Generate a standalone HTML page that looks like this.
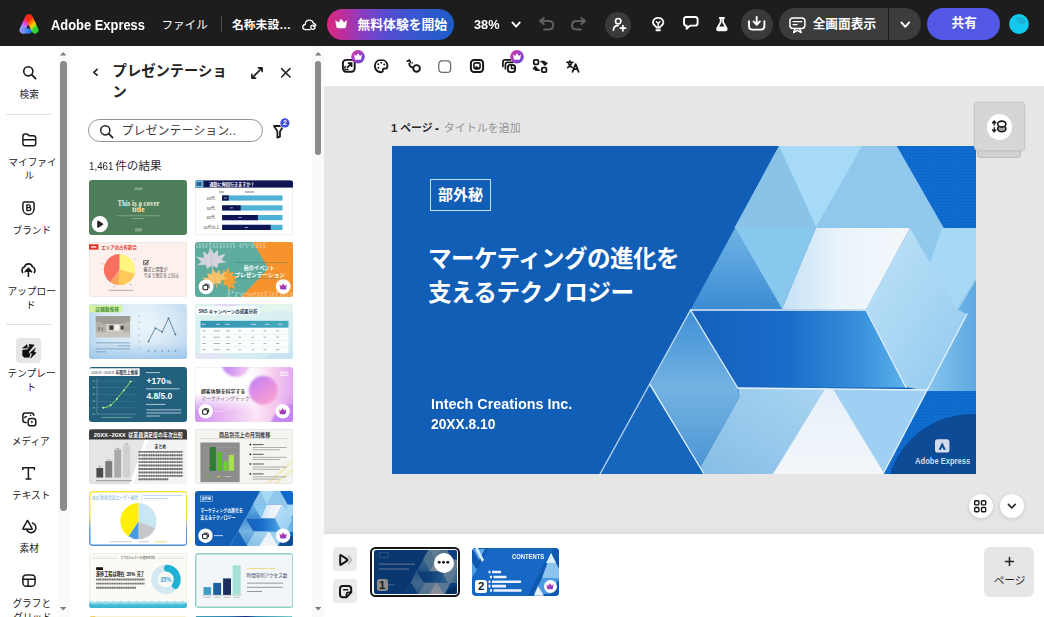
<!DOCTYPE html>
<html lang="ja">
<head>
<meta charset="utf-8">
<title>Adobe Express</title>
<style>
html,body{margin:0;padding:0}
html{width:1044px;height:617px;overflow:hidden}
body{width:1044px;height:617px;position:relative;overflow:hidden;background:#fff;font-family:"Liberation Sans","Noto Sans CJK JP",sans-serif;color:#222}
.app{position:absolute;left:0;top:0;width:1044px;height:617px;overflow:hidden;background:#fff}
.a{position:absolute}
.tl{position:absolute;white-space:nowrap;line-height:1.2;overflow:visible;height:1.2em;font-family:"Liberation Sans","Noto Sans CJK JP",sans-serif}
.ic{position:absolute;overflow:visible}
.lt{position:absolute;white-space:nowrap;line-height:1}
svg{display:block}
svg text.cj{font-family:"Liberation Sans","Noto Sans CJK JP",sans-serif}
</style>
</head>
<body>
<div class="app">
<header>
<div class="a" style="left:0px;top:0px;width:1044px;height:46px;background:#1d1d1d;"></div>
<svg class="ic" style="left:18.7px;top:13.7px" width="20" height="20" viewBox="0 0 20 20" ><defs>
<linearGradient id="lgL" x1="0.62" y1="0" x2="0.25" y2="1"><stop offset="0" stop-color="#ff2a1c"/><stop offset=".3" stop-color="#f0329a"/><stop offset=".62" stop-color="#c565f0"/><stop offset="1" stop-color="#8f9dff"/></linearGradient>
<linearGradient id="lgR" x1="0.3" y1="0" x2="0.75" y2="1"><stop offset="0" stop-color="#ff2a14"/><stop offset=".35" stop-color="#ff8a00"/><stop offset=".62" stop-color="#ffd400"/><stop offset=".85" stop-color="#7be01a"/><stop offset="1" stop-color="#2fd03a"/></linearGradient>
<linearGradient id="lgB" gradientUnits="userSpaceOnUse" x1="2" y1="0" x2="12" y2="0"><stop offset="0" stop-color="#a58cff"/><stop offset=".55" stop-color="#3f8cf4"/><stop offset="1" stop-color="#2a6ef0"/></linearGradient>
</defs>
<path d="M9.5 4 L4 16" stroke="url(#lgL)" stroke-width="7" stroke-linecap="round" fill="none"/>
<path d="M4.6 16.6 L10 16.6" stroke="url(#lgB)" stroke-width="5.8" stroke-linecap="round" fill="none"/>
<path d="M7.4 14.2 L9.2 10.6 L11.2 14.8Z" fill="#1d1d1d"/>
<path d="M10.4 4 L16 16" stroke="url(#lgR)" stroke-width="7" stroke-linecap="round" fill="none"/></svg>
<span class="lt" style="left:50.50px;top:16.86px;font-size:15.4px;font-weight:bold;color:#fff;transform:scaleX(0.8384);transform-origin:0 0;">Adobe Express</span>
<span class="tl" style="left:161.4px;top:17.5px;font-size:11.6px;width:43.3px;color:#fff">ファイル</span>
<div class="a" style="left:220.6px;top:16px;width:1px;height:16px;background:#505050;"></div>
<span class="tl" style="left:232.0px;top:17.5px;font-size:11.8px;width:55.7px;color:#fff;font-weight:bold">名称未設…</span>
<svg class="ic" style="left:302px;top:18.5px" width="16" height="12" viewBox="0 0 16 12" ><path d="M8.2 10.6 H3.6 C1.8 10.6 .8 9.4 .8 8 C.8 6.6 1.8 5.6 3.2 5.5 C3.4 3 5.2 1.2 7.4 1.2 C9.4 1.2 11 2.5 11.5 4.4 C12.6 4.5 13.6 5.2 14 6.2" fill="none" stroke="#fff" stroke-width="1.3" stroke-linecap="round" stroke-linejoin="round"/><circle cx="10.9" cy="8.3" r="2.1" fill="none" stroke="#fff" stroke-width="1.3" stroke-linecap="round" stroke-linejoin="round"/><path d="M12.9 5.9 v1.5 h-1.5" fill="none" stroke="#fff" stroke-width="1.1" stroke-linecap="round" stroke-linejoin="round"/></svg>
<div class="a" style="left:327px;top:8.7px;width:127px;height:31px;border-radius:16px;background:linear-gradient(90deg,#d9297f 0%,#c22d97 11%,#8d3cbf 27%,#5c4bd0 44%,#3b55d0 66%,#1e5cc8 100%)"></div>
<svg class="ic" style="left:335px;top:19.2px" width="12.4" height="9.2" viewBox="0 0 12.4 9.2" ><path d="M0.744 1.656 L3.3480000000000003 3.8639999999999994 L6.2 0.184 L9.052 3.8639999999999994 L11.655999999999999 1.656 L10.664 7.911999999999999 Q10.54 9.016 9.176 9.016 L3.224 9.016 Q1.8599999999999999 9.016 1.7360000000000002 7.911999999999999Z" fill="#fff" stroke="#fff" stroke-width=".6" stroke-linejoin="round"/></svg>
<span class="tl" style="left:357.5px;top:16.7px;font-size:12.8px;width:89.5px;color:#fff;font-weight:bold">無料体験を開始</span>
<span class="lt" style="left:474.40px;top:18.00px;font-size:13px;font-weight:bold;color:#fff;transform:scaleX(0.9800);transform-origin:0 0;">38%</span>
<svg class="ic" style="left:511.6px;top:22px" width="8.2" height="5" viewBox="0 0 8.2 5" ><path d="M.4 .4 L4.1 4.6 L7.799999999999999 .4" fill="none" stroke="#fff" stroke-width="1.9" stroke-linecap="round" stroke-linejoin="round"/></svg>
<svg class="ic" style="left:539px;top:17px" width="15.2" height="13.2" viewBox="0 0 15.2 13.2" ><path d="M4.8 .9 L1.2 4 L4.8 7.1 M1.6 4 H9.6 C12.4 4 14.2 5.8 14.2 8.2 C14.2 10.6 12.4 12.4 9.6 12.4 H5.2" fill="none" stroke="#606060" stroke-width="2.0" stroke-linecap="round" stroke-linejoin="round"/></svg>
<svg class="ic" style="left:571px;top:17px" width="15.2" height="13.2" viewBox="0 0 15.2 13.2" ><g transform="translate(15.2 0) scale(-1 1)"><path d="M4.8 .9 L1.2 4 L4.8 7.1 M1.6 4 H9.6 C12.4 4 14.2 5.8 14.2 8.2 C14.2 10.6 12.4 12.4 9.6 12.4 H5.2" fill="none" stroke="#606060" stroke-width="2.0" stroke-linecap="round" stroke-linejoin="round"/></g></svg>
<div class="a" style="left:605.3px;top:12.3px;width:25.4px;height:25.4px;border-radius:50%;background:#3a3a3a"></div>
<svg class="ic" style="left:610.5px;top:17px" width="15.5" height="15" viewBox="0 0 15.5 15" ><circle cx="7.2" cy="4.2" r="2.7" fill="none" stroke="#fff" stroke-width="1.7" stroke-linecap="round" stroke-linejoin="round"/><path d="M2.4 13.2 C2.6 10.2 4.4 8.7 7 8.7" fill="none" stroke="#fff" stroke-width="1.7" stroke-linecap="round" stroke-linejoin="round"/><path d="M11.9 8.6 v5.2 M9.3 11.2 h5.2" fill="none" stroke="#fff" stroke-width="1.7" stroke-linecap="round" stroke-linejoin="round"/></svg>
<svg class="ic" style="left:651.8px;top:16.6px" width="12.4" height="14.4" viewBox="0 0 12.4 14.4" ><path d="M4.5 10.6 C4.5 9.2 1 8.2 1 5.4 C1 2.7 3.3 .9 6.2 .9 C9.1 .9 11.4 2.7 11.4 5.4 C11.4 8.2 7.9 9.2 7.9 10.6 Z" fill="none" stroke="#fff" stroke-width="1.8" stroke-linecap="round" stroke-linejoin="round"/><path d="M4.4 4.6 L6.2 6.6 L8 4.6 M6.2 6.6 V10.4" fill="none" stroke="#fff" stroke-width="1.4" stroke-linecap="round" stroke-linejoin="round"/><path d="M4.4 13.2 H8" fill="none" stroke="#fff" stroke-width="1.9" stroke-linecap="round" stroke-linejoin="round"/></svg>
<svg class="ic" style="left:682.6px;top:16.2px" width="15.6" height="14" viewBox="0 0 15.6 14" ><path d="M3.2 1 H12 Q14.6 1 14.6 3.4 V7.2 Q14.6 9.6 12 9.6 H7 L3.6 12.8 V9.6 H3.2 Q1 9.6 1 7.2 V3.4 Q1 1 3.2 1Z" fill="none" stroke="#fff" stroke-width="1.9" stroke-linecap="round" stroke-linejoin="round"/></svg>
<svg class="ic" style="left:716.1px;top:16.6px" width="11.8" height="14.4" viewBox="0 0 11.8 14.4" ><path d="M3.8 1 H8 M4.7 1 V5.2 L1.2 11.4 Q.7 13.3 2.4 13.3 H9.4 Q11.1 13.3 10.6 11.4 L7.1 5.2 V1" fill="none" stroke="#fff" stroke-width="1.8" stroke-linecap="round" stroke-linejoin="round"/><path d="M2.6 9.6 H9.2 L10.4 12 Q10.6 13 9.4 13 H2.4 Q1.2 13 1.4 12Z" fill="#fff"/></svg>
<div class="a" style="left:741.2px;top:8.8px;width:31.4px;height:31.4px;border-radius:50%;background:#3a3a3a"></div>
<svg class="ic" style="left:748.4px;top:16.2px" width="17.4" height="14.6" viewBox="0 0 17.4 14.6" ><path d="M1 5.2 V10 Q1 13.6 4.6 13.6 H12.8 Q16.4 13.6 16.4 10 V5.2" fill="none" stroke="#fff" stroke-width="1.9" stroke-linecap="round" stroke-linejoin="round"/><path d="M8.7 1 V8.4 M5.5 5.4 L8.7 8.8 L11.9 5.4" fill="none" stroke="#fff" stroke-width="1.9" stroke-linecap="round" stroke-linejoin="round"/></svg>
<div class="a" style="left:779px;top:8.2px;width:142.4px;height:32px;border-radius:16px;background:#3c3c3c"></div>
<div class="a" style="left:888px;top:8.2px;width:1px;height:32px;background:#1d1d1d;"></div>
<svg class="ic" style="left:789px;top:16.5px" width="16.8" height="16.6" viewBox="0 0 16.8 16.6" ><rect x=".9" y=".9" width="15" height="10.6" rx="3.2" fill="none" stroke="#fff" stroke-width="1.5" stroke-linecap="round" stroke-linejoin="round"/><path d="M4 4.6 H12.8 M4 7.6 H8" fill="none" stroke="#fff" stroke-width="1.3" stroke-linecap="round" stroke-linejoin="round"/><path d="M6.2 11.6 L4.6 15.6 L8.4 13.4 L12.2 15.6 L10.6 11.6" fill="none" stroke="#fff" stroke-width="1.4" stroke-linecap="round" stroke-linejoin="round"/></svg>
<span class="tl" style="left:812.7px;top:17.0px;font-size:12.7px;width:63.6px;color:#fff;font-weight:bold">全画面表示</span>
<svg class="ic" style="left:901px;top:21.6px" width="8.6" height="5.2" viewBox="0 0 8.6 5.2" ><path d="M.4 .4 L4.3 4.8 L8.2 .4" fill="none" stroke="#fff" stroke-width="1.9" stroke-linecap="round" stroke-linejoin="round"/></svg>
<div class="a" style="left:927.3px;top:8.2px;width:72.5px;height:32px;border-radius:16px;background:#5258e4"></div>
<span class="tl" style="left:951.6px;top:15.8px;font-size:12.6px;width:24.0px;color:#fff;font-weight:bold">共有</span>
<svg class="ic" style="left:1008.6px;top:14px" width="20" height="20" viewBox="0 0 20 20" ><circle cx="10" cy="10" r="9.9" fill="#14c9ee"/><path d="M10 10 L6.2 4 A7 7 0 0 1 16.8 8.2 Q14.5 11.8 10 10Z" fill="#1da9c9" opacity=".75"/></svg>
</header>
<nav>
<svg class="ic" style="left:22.6px;top:65.9px" width="13.4" height="13.4" viewBox="0 0 13.4 13.4" ><circle cx="5.3" cy="5.3" r="4.6" fill="none" stroke="#1a1a1a" stroke-width="1.6" stroke-linecap="round" stroke-linejoin="round"/><path d="M8.7 8.7 L12.6 12.6" fill="none" stroke="#1a1a1a" stroke-width="1.8" stroke-linecap="round" stroke-linejoin="round"/></svg>
<span class="tl" style="left:19.5px;top:88.7px;font-size:9.7px;width:18.6px;color:#222">検索</span>
<div class="a" style="left:6px;top:114px;width:45px;height:1px;background:#e1e1e1;"></div>
<svg class="ic" style="left:21.6px;top:133.3px" width="14.6" height="13.6" viewBox="0 0 14.6 13.6" ><path d="M.9 3.2 Q.9 .9 3.2 .9 H4.6 Q5.5 .9 6.1 1.7 Q6.8 2.7 7.8 2.7 H11.4 Q13.7 2.7 13.7 5 V10.4 Q13.7 12.7 11.4 12.7 H3.2 Q.9 12.7 .9 10.4Z M.9 6.7 H13.7" fill="none" stroke="#1a1a1a" stroke-width="1.5" stroke-linecap="round" stroke-linejoin="round"/></svg>
<span class="tl" style="left:8.3px;top:156.6px;font-size:9.7px;width:40.9px;color:#222">マイファイ</span><span class="tl" style="left:24.4px;top:170.4px;font-size:9.7px;width:8.8px;color:#222">ル</span>
<svg class="ic" style="left:22.3px;top:200.8px" width="13" height="14.4" viewBox="0 0 13 14.4" ><path d="M2.6 .9 H10.4 Q12.1 .9 12.1 2.6 V7.4 C12.1 11 9.6 13.4 6.5 13.4 C3.4 13.4 .9 11 .9 7.4 V2.6 Q.9 .9 2.6 .9Z" fill="none" stroke="#1a1a1a" stroke-width="1.5" stroke-linecap="round" stroke-linejoin="round"/><path d="M4.9 3.9 V9.6 H7.2 Q8.9 9.6 8.9 8.1 Q8.9 6.6 7.2 6.6 H4.9 M4.9 3.9 H6.8 Q8.3 3.9 8.3 5.2 Q8.3 6.6 6.8 6.6" fill="none" stroke="#1a1a1a" stroke-width="1.4" stroke-linecap="round" stroke-linejoin="round"/></svg>
<span class="tl" style="left:12.5px;top:224.9px;font-size:9.7px;width:32.4px;color:#222">ブランド</span>
<svg class="ic" style="left:21.4px;top:262.8px" width="15" height="14.4" viewBox="0 0 15 14.4" ><path d="M1.6 9.6 C.4 7.2 1 4.6 3.6 3.8 C4.2 1.8 5.8 .9 7.6 .9 C9.6 .9 11 2 11.4 3.8 C13.8 4.4 14.6 7.2 13.4 9.6" fill="none" stroke="#1a1a1a" stroke-width="1.6" stroke-linecap="round" stroke-linejoin="round"/><path d="M7.4 13.4 V6 M4.2 8.8 L7.4 5.4 L10.6 8.8" fill="none" stroke="#1a1a1a" stroke-width="1.6" stroke-linecap="round" stroke-linejoin="round"/><path d="M4.4 9 L7.4 5.8 L10.4 9Z" fill="#1a1a1a"/></svg>
<span class="tl" style="left:7.5px;top:285.5px;font-size:9.7px;width:42.9px;color:#222">アップロー</span><span class="tl" style="left:26.1px;top:300.2px;font-size:9.7px;width:5.8px;color:#222">ド</span>
<div class="a" style="left:6px;top:323.5px;width:45px;height:1px;background:#e1e1e1;"></div>
<div class="a" style="left:16px;top:338.2px;width:25px;height:25px;background:#e6e6e6;border-radius:4px;"></div>
<svg class="ic" style="left:21.6px;top:343.6px" width="14.6" height="14.4" viewBox="0 0 14.6 14.4" ><path d="M0.66 4.01 L5.06 0.70 L5.25 4.01Z M7.28 0.47 L12.18 1.01 L6.50 7.98 L8.05 10.19 L7.12 13.15 L2.22 13.15 L0.74 11.67 L0.74 6.07 L5.56 5.84 L7.28 2.53Z M13.35 4.36 L8.29 8.79 L10.39 9.81 L8.75 14.09 L14.12 8.87 L11.71 7.94Z" fill="#111" stroke="#111" stroke-width=".7" stroke-linejoin="round"/></svg>
<span class="tl" style="left:7.5px;top:367.6px;font-size:9.7px;width:43.1px;color:#222">テンプレー</span><span class="tl" style="left:26.4px;top:381.8px;font-size:9.7px;width:5.2px;color:#222">ト</span>
<svg class="ic" style="left:21.6px;top:411.8px" width="14.8" height="14.6" viewBox="0 0 14.8 14.6" ><path d="M4.2 10.4 H3.4 Q.9 10.4 .9 7.9 V3.4 Q.9 .9 3.4 .9 H9.2 Q11.7 .9 11.9 3.2" fill="none" stroke="#1a1a1a" stroke-width="1.5" stroke-linecap="round" stroke-linejoin="round"/><path d="M2.6 5.6 Q3.4 4.4 4.6 4.8" fill="none" stroke="#1a1a1a" stroke-width="1.3" stroke-linecap="round" stroke-linejoin="round"/><circle cx="8.6" cy="3.4" r=".8" fill="#1a1a1a"/><rect x="6.2" y="6.4" width="7.6" height="7.4" rx="2.4" fill="none" stroke="#1a1a1a" stroke-width="1.5" stroke-linecap="round" stroke-linejoin="round"/><path d="M9.2 8.6 L11.4 10.1 L9.2 11.6Z" fill="#1a1a1a"/></svg>
<span class="tl" style="left:11.7px;top:436.4px;font-size:9.7px;width:33.3px;color:#222">メディア</span>
<svg class="ic" style="left:22.3px;top:466.8px" width="13.2" height="12.8" viewBox="0 0 13.2 12.8" ><path d="M.8 2.6 V.8 H12.4 V2.6 M6.4 .8 V11.9 M4.2 11.9 H8.8" fill="none" stroke="#1a1a1a" stroke-width="1.5" stroke-linecap="round" stroke-linejoin="round"/></svg>
<span class="tl" style="left:12.0px;top:489.6px;font-size:9.7px;width:33.0px;color:#222">テキスト</span>
<svg class="ic" style="left:21.5px;top:519.2px" width="15.4" height="14.8" viewBox="0 0 15.4 14.8" ><path d="M10.4 4 A4.9 4.9 0 1 1 4.4 10.2" fill="none" stroke="#1a1a1a" stroke-width="1.5" stroke-linecap="round" stroke-linejoin="round"/><path d="M5.5 1.4 L.9 9.6 Q.6 10.3 1.5 10.3 H9.6 Q10.5 10.3 10.1 9.6 L5.6 1.4Z" fill="none" stroke="#1a1a1a" stroke-width="1.5" stroke-linecap="round" stroke-linejoin="round"/></svg>
<span class="tl" style="left:19.5px;top:543.2px;font-size:9.7px;width:18.6px;color:#222">素材</span>
<svg class="ic" style="left:21.8px;top:574.2px" width="14" height="13.2" viewBox="0 0 14 13.2" ><rect x=".9" y=".9" width="12.2" height="11.4" rx="3.4" fill="none" stroke="#1a1a1a" stroke-width="1.5" stroke-linecap="round" stroke-linejoin="round"/><path d="M.9 5.2 H13.1 M6.1 5.2 V12.3" fill="none" stroke="#1a1a1a" stroke-width="1.4" stroke-linecap="round" stroke-linejoin="round"/></svg>
<span class="tl" style="left:12.4px;top:597.7px;font-size:9.7px;width:32.9px;color:#222">グラフと</span><span class="tl" style="left:13.0px;top:611.8px;font-size:9.7px;width:31.5px;color:#222">グリッド</span>
<div class="a" style="left:57.5px;top:46px;width:12.5px;height:571px;background:#fafafa;"></div>
<svg class="ic" style="left:60.199999999999996px;top:52.2px" width="6.4" height="3.6" viewBox="0 0 6.4 3.6" ><path d="M0 3.6 L3.2 0 L6.4 3.6Z" fill="#7d7d7d"/></svg>
<div class="a" style="left:60.1px;top:61.4px;width:6.7px;height:449.3px;background:#8b8b8b;border-radius:3.4px;"></div>
<svg class="ic" style="left:60.199999999999996px;top:607px" width="6.4" height="3.6" viewBox="0 0 6.4 3.6" ><path d="M0 0 L3.2 3.6 L6.4 0Z" fill="#7d7d7d"/></svg>
</nav>
<aside>
<svg class="ic" style="left:93.2px;top:69.2px" width="4.6" height="6.6" viewBox="0 0 4.6 6.6" ><path d="M4.1 .4 L.8 3.3 L4.1 6.199999999999999" fill="none" stroke="#222" stroke-width="1.7" stroke-linecap="round" stroke-linejoin="round"/></svg>
<span class="tl" style="left:112.6px;top:63.4px;font-size:14.3px;width:111.5px;color:#222;font-weight:bold">プレゼンテーショ</span>
<span class="tl" style="left:112.6px;top:84.0px;font-size:14.3px;width:12.2px;color:#222;font-weight:bold">ン</span>
<svg class="ic" style="left:251.4px;top:66.5px" width="12" height="12" viewBox="0 0 12 12" ><path d="M1.2 10.8 L10.8 1.2 M7.4 .9 H11.1 V4.6 M.9 7.4 V11.1 H4.6" fill="none" stroke="#1a1a1a" stroke-width="1.6" stroke-linecap="round" stroke-linejoin="round"/></svg>
<svg class="ic" style="left:281px;top:67.7px" width="9.6" height="9.6" viewBox="0 0 9.6 9.6" ><path d="M.6 .6 L9.0 9.0 M9.0 .6 L.6 9.0" fill="none" stroke="#222" stroke-width="1.5" stroke-linecap="round" stroke-linejoin="round"/></svg>
<div class="a" style="left:88.4px;top:118.7px;width:172.4px;height:21.6px;border-radius:13px;border:1.8px solid #939393;background:#fff"></div>
<svg class="ic" style="left:100.3px;top:124.5px" width="13.4" height="13.4" viewBox="0 0 13.4 13.4" ><circle cx="5.3" cy="5.3" r="4.6" fill="none" stroke="#222" stroke-width="1.5" stroke-linecap="round" stroke-linejoin="round"/><path d="M8.7 8.7 L12.6 12.6" fill="none" stroke="#222" stroke-width="1.7" stroke-linecap="round" stroke-linejoin="round"/></svg>
<span class="tl" style="left:121.4px;top:123.8px;font-size:12px;width:97.8px;color:#3c3c3c">プレゼンテーション</span>
<span class="tl" style="left:224.6px;top:124.0px;font-size:12px;width:9.7px;color:#3c3c3c">…</span>
<svg class="ic" style="left:273.4px;top:123.8px" width="14" height="14.4" viewBox="0 0 14 14.4" ><path d="M1 2 H10.4 L7 7.4 V12.6 L4.4 13.6 V7.4Z" fill="none" stroke="#1a1a1a" stroke-width="1.8" stroke-linecap="round" stroke-linejoin="round"/><circle cx="11.9" cy="-1.1" r="5.3" fill="#fff"/><circle cx="11.9" cy="-1.1" r="4.6" fill="#444ce0"/><text x="11.9" y="1.3" font-family="Liberation Sans, sans-serif" font-weight="bold" font-size="6.8" fill="#fff" text-anchor="middle">2</text></svg>
<span class="lt" style="left:88.80px;top:160.61px;font-size:11.8px;color:#1f1f1f;transform:scaleX(0.8263);transform-origin:0 0;">1,461</span>
<span class="tl" style="left:115.2px;top:159.3px;font-size:11.6px;width:43.0px;color:#2c2c2c">件の結果</span>
<div class="a" style="left:88.75px;top:179.75px;width:98.5px;height:55px;border-radius:3px;overflow:hidden;background:#4e7d5a;"><svg width="98.5" height="55" viewBox="0 0 98.5 55"><text x="49.5" y="26.2" font-family="Liberation Serif, serif" font-size="8.6" font-weight="bold" fill="#e8ead9" text-anchor="middle" textLength="42.2" lengthAdjust="spacingAndGlyphs" >This is a cover</text><text x="49.3" y="32.1" font-family="Liberation Serif, serif" font-size="8.6" font-weight="bold" fill="#e8ead9" text-anchor="middle" textLength="12.4" lengthAdjust="spacingAndGlyphs" >title</text><rect x="45.4" y="7.4" width="8.2" height="2.6" rx=".6" fill="#cfdcc8" opacity=".42"/><rect x="27.4" y="35.6" width="44" height=".55" fill="#dfe8d8" opacity=".62"/><rect x="43" y="38.2" width="12.6" height=".55" fill="#dfe8d8" opacity=".62"/><rect x="46" y="48.2" width="6.8" height="3.4" rx=".6" fill="#cfdcc8" opacity=".42"/><circle cx="10.85" cy="44.2" r="8.1" fill="#fff"/><path d="M8.7 41.4 Q8.7 40.8 9.3 41.1 L13.7 43.8 Q14.2 44.2 13.7 44.6 L9.3 47.3 Q8.7 47.6 8.7 47Z" fill="#222" stroke="#222" stroke-width=".9" stroke-linejoin="round"/></svg></div>
<div class="a" style="left:194.5px;top:179.75px;width:98.5px;height:55px;border-radius:3px;overflow:hidden;background:#fff;box-shadow:inset 0 0 0 .5px #e4e4e4;"><svg width="98.5" height="55" viewBox="0 0 98.5 55"><rect x="0" y=".4" width="98.5" height="7.2" fill="#0f1552"/><rect x="0" y=".4" width="8.4" height="7.2" fill="#6bb9dd"/><rect x="1.6" y="2" width="5" height="4" fill="#0f1552" opacity=".55"/><text class="cj" x="14.48" y="5.91" font-size="4.8" font-weight="bold" fill="#fff" textLength="45" lengthAdjust="spacingAndGlyphs">運動に毎回行きますか？</text><rect x="24" y="11.6" width="5" height=".8" fill="#555"/><rect x="50" y="11.6" width="9" height=".8" fill="#555"/><rect x="27.1" y="15.4" width="60.4" height="5.2" fill="#4fb1d6"/><rect x="27.1" y="15.4" width="6.6" height="5.2" fill="#0f1552"/><rect x="28.9" y="17.6" width="3" height=".8" fill="#fff" opacity=".7"/><text class="cj" x="11.45" y="19.60" font-size="4" fill="#333">20代</text><rect x="27.1" y="25.3" width="60.4" height="5.2" fill="#4fb1d6"/><rect x="27.1" y="25.3" width="18.6" height="5.2" fill="#0f1552"/><rect x="34.9" y="27.5" width="3" height=".8" fill="#fff" opacity=".7"/><text class="cj" x="11.49" y="29.50" font-size="4" fill="#333">30代</text><rect x="27.1" y="35.0" width="60.4" height="5.2" fill="#4fb1d6"/><rect x="27.1" y="35.0" width="35.8" height="5.2" fill="#0f1552"/><rect x="43.5" y="37.2" width="3" height=".8" fill="#fff" opacity=".7"/><text class="cj" x="11.52" y="39.20" font-size="4" fill="#333">40代</text><rect x="27.1" y="44.8" width="60.4" height="5.2" fill="#4fb1d6"/><rect x="27.1" y="44.8" width="48.6" height="5.2" fill="#0f1552"/><rect x="49.9" y="47.0" width="3" height=".8" fill="#fff" opacity=".7"/><text class="cj" x="8.39" y="49.00" font-size="4" fill="#333">50代以上</text></svg></div>
<div class="a" style="left:88.75px;top:242.0px;width:98.5px;height:55px;border-radius:3px;overflow:hidden;background:#fdf1ee;box-shadow:inset 0 0 0 .5px #f0dcd6;"><svg width="98.5" height="55" viewBox="0 0 98.5 55"><rect x="-.5" y="2.3" width="10" height="5.3" fill="#dc3028"/><rect x="1.8" y="4.2" width="5.6" height="1.5" fill="#fff" opacity=".85"/><text class="cj" x="12.33" y="6.76" font-size="4.9" font-weight="bold" fill="#dc3a30" textLength="35.6" lengthAdjust="spacingAndGlyphs">エリアの占有割合</text><path d="M30.5 27.6 L30.50 11.90 A15.7 15.7 0 0 1 45.73 31.40Z" fill="#fff480"/><path d="M30.5 27.6 L45.73 31.40 A15.7 15.7 0 0 1 29.40 43.26Z" fill="#fdc958"/><path d="M30.5 27.6 L29.40 43.26 A15.7 15.7 0 0 1 21.27 40.30Z" fill="#f9a45a"/><path d="M30.5 27.6 L21.27 40.30 A15.7 15.7 0 0 1 30.50 11.90Z" fill="#f87060"/><path d="M54.6 18.6 h4.2 v4.2 h-4.2Z" fill="none" stroke="#333" stroke-width=".7"/><path d="M55.4 20.4 l1.5 1.5 l2.8 -3.8" fill="none" stroke="#333" stroke-width=".9"/><text class="cj" x="54.59" y="29.01" font-size="4.2" fill="#444" textLength="23.9" lengthAdjust="spacingAndGlyphs">最近と開業が</text><text class="cj" x="54.65" y="35.29" font-size="4.2" fill="#444" textLength="35.4" lengthAdjust="spacingAndGlyphs">今まで想定を上回る</text><rect x="19.5" y="47.8" width="24.7" height="1" fill="#666" opacity=".5"/><rect x="12.4" y="21.6" width="1.8" height=".7" fill="#999"/><rect x="44.6" y="16.6" width="1.8" height=".7" fill="#999"/><rect x="40.6" y="42" width="1.8" height=".7" fill="#999"/><rect x="24.4" y="44.4" width="1.8" height=".7" fill="#999"/></svg></div>
<div class="a" style="left:194.5px;top:242.0px;width:98.5px;height:55px;border-radius:3px;overflow:hidden;background:#5eac9d;"><svg width="98.5" height="55" viewBox="0 0 98.5 55"><path d="M57.7 0 H98.5 V55 H46.1 L73.5 26.6Z" fill="#f6932c"/><text x="0.4" y="5.6" font-family="Liberation Serif, serif" font-size="9.6" font-weight="bold" fill="#fff" text-anchor="start" textLength="71" lengthAdjust="spacingAndGlyphs" opacity=".3">autumn event</text><text x="31.4" y="55.4" font-family="Liberation Serif, serif" font-size="9.6" font-weight="bold" fill="#fff" text-anchor="start" textLength="70" lengthAdjust="spacingAndGlyphs" opacity=".3">Presentation</text><g transform="translate(16.5 18.5) rotate(-6) scale(1.18 1.0)"><path d="M0 -13 L2.6 -6.4 L6.4 -10 L6 -3.6 L12.6 -5.6 L8.6 .2 L12.4 3.2 L5.4 3.6 L4.2 8 L.6 5 L0 12.4 L-.6 5 L-4.2 8 L-5.4 3.6 L-12.4 3.2 L-8.6 .2 L-12.6 -5.6 L-6 -3.6 L-6.4 -10 L-2.6 -6.4Z" fill="#d5d4dc"/><path d="M0 -10 V11" stroke="#b9b8c4" stroke-width=".5"/></g><g transform="translate(33 37.5) rotate(72) scale(.92 .8)"><path d="M0 -13 L2.6 -6.4 L6.4 -10 L6 -3.6 L12.6 -5.6 L8.6 .2 L12.4 3.2 L5.4 3.6 L4.2 8 L.6 5 L0 12.4 L-.6 5 L-4.2 8 L-5.4 3.6 L-12.4 3.2 L-8.6 .2 L-12.6 -5.6 L-6 -3.6 L-6.4 -10 L-2.6 -6.4Z" fill="#f5a13a"/></g><g transform="translate(20 37) rotate(-14) scale(.98 .8)"><path d="M0 -13 L2.6 -6.4 L6.4 -10 L6 -3.6 L12.6 -5.6 L8.6 .2 L12.4 3.2 L5.4 3.6 L4.2 8 L.6 5 L0 12.4 L-.6 5 L-4.2 8 L-5.4 3.6 L-12.4 3.2 L-8.6 .2 L-12.6 -5.6 L-6 -3.6 L-6.4 -10 L-2.6 -6.4Z" fill="#f8c46e"/><path d="M0 -10 V11" stroke="#e9a94e" stroke-width=".5"/></g><rect x="40.8" y="20" width="52.6" height=".45" fill="#3d6e66" opacity=".75"/><rect x="40.8" y="36.4" width="42" height=".45" fill="#3d6e66" opacity=".75"/><text class="cj" x="48.65" y="27.71" font-size="5.6" font-weight="bold" fill="#fff" textLength="31" lengthAdjust="spacingAndGlyphs">秋のイベント</text><text class="cj" x="39.46" y="34.62" font-size="5.6" font-weight="bold" fill="#fff" textLength="50.4" lengthAdjust="spacingAndGlyphs">プレゼンテーション</text><circle cx="11" cy="44.8" r="7.4" fill="#fff"/><path d="M9.8 42.199999999999996 H12.6 Q14 42.199999999999996 14 43.599999999999994 V45.8" fill="none" stroke="#1a1a1a" stroke-width=".9" stroke-linecap="round"/><rect x="8" y="43.199999999999996" width="4.8" height="4.6" rx="1.4" fill="none" stroke="#1a1a1a" stroke-width="1.1"/><defs><linearGradient id="bc1" x1="0" y1="0" x2="1" y2="1"><stop offset="0" stop-color="#e23d96"/><stop offset="1" stop-color="#6a3fd2"/></linearGradient></defs><circle cx="88.2" cy="44.6" r="7.4" fill="#fff"/><g transform="translate(84.10000000000001 41.4)"><path d="M0.49199999999999994 1.1159999999999999 L2.214 2.604 L4.1 0.12400000000000001 L5.986 2.604 L7.707999999999999 1.1159999999999999 L7.052 5.332 Q6.969999999999999 6.076 6.068 6.076 L2.1319999999999997 6.076 Q1.2299999999999998 6.076 1.148 5.332Z" fill="url(#bc1)"/></g></svg></div>
<div class="a" style="left:88.75px;top:304.25px;width:98.5px;height:55px;border-radius:3px;overflow:hidden;background:#dbe8f6;"><svg width="98.5" height="55" viewBox="0 0 98.5 55"><defs><linearGradient id="g20" x1="0" y1="0" x2="1" y2="0"><stop offset="0" stop-color="#bcd9f0"/><stop offset=".12" stop-color="#d6e9f6"/><stop offset=".55" stop-color="#e2eff8"/><stop offset="1" stop-color="#c6def2"/></linearGradient><linearGradient id="g20c" x1="0" y1="0" x2="0" y2="1"><stop offset="0" stop-color="#9cc6ea" stop-opacity="0"/><stop offset=".7" stop-color="#9cc6ea" stop-opacity=".15"/><stop offset="1" stop-color="#8cbce6" stop-opacity=".7"/></linearGradient><radialGradient id="g20b" cx=".6" cy=".45" r=".5"><stop offset="0" stop-color="#fff" stop-opacity=".6"/><stop offset="1" stop-color="#fff" stop-opacity="0"/></radialGradient></defs><rect width="98.5" height="55" fill="url(#g20)"/><rect width="98.5" height="55" fill="url(#g20b)"/><rect width="98.5" height="55" fill="url(#g20c)"/><rect x="0" y="1" width="33.2" height="7.4" fill="#d6f0a2"/><text class="cj" x="6.20" y="6.92" font-size="4.8" font-weight="bold" fill="#4a9440" textLength="23.8" lengthAdjust="spacingAndGlyphs">店舗数推移</text><rect x="6.8" y="12.1" width="34.3" height="21.1" fill="#b4b1a9"/><rect x="6.8" y="12.1" width="34.3" height="5.2" fill="#8f908c"/><path d="M6.8 17 L16 20 H33 L41.1 17 V12.1 H6.8Z" fill="#9d9c96"/><rect x="17" y="20" width="17" height="8" fill="#cfccc4"/><rect x="25.5" y="21" width="4.8" height="5.4" fill="#f4f3ef"/><rect x="20.4" y="21.4" width="4" height="4.4" fill="#3c3c3c"/><rect x="31.6" y="21.6" width="3" height="4" fill="#444"/><rect x="6.8" y="28.4" width="34.3" height="4.8" fill="#c9c5bc"/><rect x="9" y="23" width="1.4" height="3.6" fill="#7a766c"/><rect x="12.6" y="23.4" width="1.2" height="3.2" fill="#7a766c"/><rect x="6.8" y="38.30" width="34.3" height="1.05" fill="#5f86b0" opacity="0.62"/><rect x="6.8" y="41.30" width="34.3" height="1.05" fill="#5f86b0" opacity="0.62"/><rect x="6.8" y="44.30" width="34.3" height="1.05" fill="#5f86b0" opacity="0.62"/><rect x="6.8" y="47.30" width="10" height="1.05" fill="#5f86b0" opacity="0.62"/><rect x="6.8" y="41.3" width="22" height="1.05" fill="#dbe9f6"/><path d="M59.5 37.4 L66.4 24.2 L73.2 27.9 L79.5 14.2 L86.4 30.5" fill="none" stroke="#4a7a9a" stroke-width=".85" stroke-linejoin="round"/><circle cx="59.5" cy="37.4" r=".95" fill="#4a7a9a"/><circle cx="66.4" cy="24.2" r=".95" fill="#4a7a9a"/><circle cx="73.2" cy="27.9" r=".95" fill="#4a7a9a"/><circle cx="79.5" cy="14.2" r=".95" fill="#4a7a9a"/><circle cx="86.4" cy="30.5" r=".95" fill="#4a7a9a"/><path d="M58.2 47.4 h2.6 l-1.3 -1.6Z" fill="#5b7d98" opacity=".75"/><path d="M65.10000000000001 47.4 h2.6 l-1.3 -1.6Z" fill="#5b7d98" opacity=".75"/><path d="M71.9 47.4 h2.6 l-1.3 -1.6Z" fill="#5b7d98" opacity=".75"/><path d="M78.2 47.4 h2.6 l-1.3 -1.6Z" fill="#5b7d98" opacity=".75"/><path d="M85.10000000000001 47.4 h2.6 l-1.3 -1.6Z" fill="#5b7d98" opacity=".75"/><rect x="49.4" y="11.4" width="1.6" height="1.1" fill="#7f9cb4" opacity=".55"/><rect x="49.4" y="17.8" width="1.6" height="1.1" fill="#7f9cb4" opacity=".55"/><rect x="49.4" y="24.2" width="1.6" height="1.1" fill="#7f9cb4" opacity=".55"/><rect x="49.4" y="30.6" width="1.6" height="1.1" fill="#7f9cb4" opacity=".55"/><rect x="49.4" y="37" width="1.6" height="1.1" fill="#7f9cb4" opacity=".55"/><rect x="49.4" y="43.4" width="1.6" height="1.1" fill="#7f9cb4" opacity=".55"/></svg></div>
<div class="a" style="left:194.5px;top:304.25px;width:98.5px;height:55px;border-radius:3px;overflow:hidden;background:#d9f0f2;box-shadow:inset 0 0 0 .5px #cfe6e8;"><svg width="98.5" height="55" viewBox="0 0 98.5 55"><defs><linearGradient id="g21" x1="0" y1="0" x2="1" y2="1"><stop offset="0" stop-color="#dff2f0"/><stop offset=".5" stop-color="#d9f0f2"/><stop offset="1" stop-color="#cdeaee"/></linearGradient><linearGradient id="g21h" x1="0" y1="0" x2="1" y2="0"><stop offset="0" stop-color="#3190b0"/><stop offset="1" stop-color="#46abbd"/></linearGradient></defs><rect width="98.5" height="55" fill="url(#g21)"/><path d="M18 0 Q30 5 44 1 L46 0Z" fill="#e4d4f4" opacity=".8"/><path d="M62 10 Q80 4 98.5 8 V0 H70Z" fill="#e8f6e8" opacity=".7"/><path d="M0 50 Q20 45 40 55 H0Z" fill="#e6e0f4" opacity=".6"/><path d="M66 55 Q84 45 98.5 47 V55Z" fill="#c6e2f4" opacity=".85"/><rect x=".8" y="2.2" width="64" height="8.8" rx="3" fill="#fff" opacity=".75"/><text x="3.4" y="8.8" font-family="Liberation Sans, sans-serif" font-size="4.9" font-weight="bold" fill="#1f3f58" text-anchor="start" textLength="9" lengthAdjust="spacingAndGlyphs" >SNS</text><text class="cj" x="13.83" y="8.85" font-size="4.9" font-weight="bold" fill="#1f3f58" textLength="48.6" lengthAdjust="spacingAndGlyphs">キャンペーンの成果分析</text><rect x="5.5" y="16.8" width="88" height="32.2" fill="#fff" opacity=".92"/><rect x="5.5" y="16.8" width="88" height="6.9" fill="url(#g21h)"/><rect x="5.5" y="30.0" width="88" height=".3" fill="#c4dfe4"/><rect x="5.5" y="36.4" width="88" height=".3" fill="#c4dfe4"/><rect x="5.5" y="42.8" width="88" height=".3" fill="#c4dfe4"/><rect x="6.5" y="19.8" width="4" height=".9" fill="#fff" opacity=".7"/><rect x="21" y="19.8" width="4" height=".9" fill="#fff" opacity=".7"/><rect x="30" y="19.8" width="5" height=".9" fill="#fff" opacity=".7"/><rect x="56" y="19.8" width="5" height=".9" fill="#fff" opacity=".7"/><rect x="70" y="19.8" width="4.5" height=".9" fill="#fff" opacity=".7"/><rect x="83" y="19.8" width="4" height=".9" fill="#fff" opacity=".7"/><rect x="7.5" y="26.4" width="3.4" height=".9" fill="#4c6a76" opacity=".55"/><rect x="18.5" y="26.4" width="6.4" height=".9" fill="#4c6a76" opacity=".55"/><rect x="31" y="26.4" width="4.2" height=".9" fill="#4c6a76" opacity=".55"/><rect x="43.5" y="26.4" width="2.6" height=".9" fill="#4c6a76" opacity=".55"/><rect x="56.5" y="26.4" width="2.4" height=".9" fill="#4c6a76" opacity=".55"/><rect x="68.5" y="26.4" width="2.8" height=".9" fill="#4c6a76" opacity=".55"/><rect x="81" y="26.4" width="3.2" height=".9" fill="#4c6a76" opacity=".55"/><rect x="7.5" y="32.7" width="3.4" height=".9" fill="#4c6a76" opacity=".55"/><rect x="18.5" y="32.7" width="6.4" height=".9" fill="#4c6a76" opacity=".55"/><rect x="31" y="32.7" width="4.2" height=".9" fill="#4c6a76" opacity=".55"/><rect x="43.5" y="32.7" width="2.6" height=".9" fill="#4c6a76" opacity=".55"/><rect x="56.5" y="32.7" width="2.4" height=".9" fill="#4c6a76" opacity=".55"/><rect x="68.5" y="32.7" width="2.8" height=".9" fill="#4c6a76" opacity=".55"/><rect x="81" y="32.7" width="3.2" height=".9" fill="#4c6a76" opacity=".55"/><rect x="7.5" y="39.0" width="3.4" height=".9" fill="#4c6a76" opacity=".55"/><rect x="18.5" y="39.0" width="6.4" height=".9" fill="#4c6a76" opacity=".55"/><rect x="31" y="39.0" width="4.2" height=".9" fill="#4c6a76" opacity=".55"/><rect x="43.5" y="39.0" width="2.6" height=".9" fill="#4c6a76" opacity=".55"/><rect x="56.5" y="39.0" width="2.4" height=".9" fill="#4c6a76" opacity=".55"/><rect x="68.5" y="39.0" width="2.8" height=".9" fill="#4c6a76" opacity=".55"/><rect x="81" y="39.0" width="3.2" height=".9" fill="#4c6a76" opacity=".55"/><rect x="7.5" y="45.3" width="3.4" height=".9" fill="#4c6a76" opacity=".55"/><rect x="18.5" y="45.3" width="6.4" height=".9" fill="#4c6a76" opacity=".55"/><rect x="31" y="45.3" width="4.2" height=".9" fill="#4c6a76" opacity=".55"/><rect x="43.5" y="45.3" width="2.6" height=".9" fill="#4c6a76" opacity=".55"/><rect x="56.5" y="45.3" width="2.4" height=".9" fill="#4c6a76" opacity=".55"/><rect x="68.5" y="45.3" width="2.8" height=".9" fill="#4c6a76" opacity=".55"/><rect x="81" y="45.3" width="3.2" height=".9" fill="#4c6a76" opacity=".55"/></svg></div>
<div class="a" style="left:88.75px;top:366.5px;width:98.5px;height:55px;border-radius:3px;overflow:hidden;background:#22607e;"><svg width="98.5" height="55" viewBox="0 0 98.5 55"><rect x="0" y="1.3" width="50.6" height="7.7" fill="#fff"/><text x="2.2" y="7" font-family="Liberation Sans, sans-serif" font-size="4.0" fill="#2a3a44" text-anchor="start" textLength="23" lengthAdjust="spacingAndGlyphs" >20XX~20XX</text><text class="cj" x="26.43" y="6.91" font-size="4.5" font-weight="bold" fill="#2a3a44" textLength="22.5" lengthAdjust="spacingAndGlyphs">年間売上推移</text><rect x="7.9" y="13.9" width="39" height=".28" fill="#fff" opacity=".32"/><rect x="7.9" y="20.3" width="39" height=".28" fill="#fff" opacity=".32"/><rect x="7.9" y="27.1" width="39" height=".28" fill="#fff" opacity=".32"/><rect x="7.9" y="34" width="39" height=".28" fill="#fff" opacity=".32"/><rect x="7.9" y="40.8" width="39" height=".28" fill="#fff" opacity=".32"/><path d="M7.9 11 V47.1 H47.4" fill="none" stroke="#fff" stroke-width=".4" opacity=".55"/><rect x="3.8" y="13.5" width="2.2" height=".9" fill="#a8d8b0" opacity=".8"/><rect x="3.8" y="19.900000000000002" width="2.2" height=".9" fill="#a8d8b0" opacity=".8"/><rect x="3.8" y="26.700000000000003" width="2.2" height=".9" fill="#a8d8b0" opacity=".8"/><rect x="3.8" y="33.6" width="2.2" height=".9" fill="#a8d8b0" opacity=".8"/><rect x="3.8" y="40.4" width="2.2" height=".9" fill="#a8d8b0" opacity=".8"/><rect x="3.8" y="46.7" width="2.2" height=".9" fill="#a8d8b0" opacity=".8"/><path d="M14.2 40.8 Q18.6 40.4 21.6 38.2 T27.9 31.9 T34.8 23.4 T41.6 14.5" fill="none" stroke="#8ae05a" stroke-width="1"/><path d="M13.0 40.8 l1.2 -1.2 l1.2 1.2 l-1.2 1.2Z" fill="#c9f2a4"/><path d="M20.400000000000002 38.2 l1.2 -1.2 l1.2 1.2 l-1.2 1.2Z" fill="#c9f2a4"/><path d="M26.7 31.9 l1.2 -1.2 l1.2 1.2 l-1.2 1.2Z" fill="#c9f2a4"/><path d="M33.599999999999994 23.4 l1.2 -1.2 l1.2 1.2 l-1.2 1.2Z" fill="#c9f2a4"/><path d="M40.4 14.5 l1.2 -1.2 l1.2 1.2 l-1.2 1.2Z" fill="#c9f2a4"/><rect x="12.6" y="49.9" width="30" height=".9" fill="#9ccab0" opacity=".65"/><rect x="56.9" y="5" width="14.2" height="1.1" fill="#d5e8ee" opacity=".7"/><text x="57.4" y="16.6" font-family="Liberation Sans, sans-serif" font-size="8.4" font-weight="bold" fill="#fff" text-anchor="start" textLength="19.4" lengthAdjust="spacingAndGlyphs" >+170</text><text x="77.2" y="16.6" font-family="Liberation Sans, sans-serif" font-size="6.0" font-weight="bold" fill="#fff" text-anchor="start" textLength="5" lengthAdjust="spacingAndGlyphs" >%</text><rect x="56.9" y="21.3" width="33.7" height="1.1" fill="#d5e8ee" opacity=".7"/><text x="57.4" y="32.3" font-family="Liberation Sans, sans-serif" font-size="8.6" font-weight="bold" fill="#fff" text-anchor="start" textLength="25.8" lengthAdjust="spacingAndGlyphs" >4.8/5.0</text><rect x="56.9" y="36.9" width="19.5" height="1.1" fill="#d5e8ee" opacity=".7"/><rect x="57.4" y="42.40" width="34.8" height="1.0" fill="#e6f0f4" opacity="0.72"/><rect x="57.4" y="45.45" width="34.8" height="1.0" fill="#e6f0f4" opacity="0.72"/><rect x="57.4" y="48.50" width="13.2" height="1.0" fill="#e6f0f4" opacity="0.72"/></svg></div>
<div class="a" style="left:194.5px;top:366.5px;width:98.5px;height:55px;border-radius:3px;overflow:hidden;background:#fff;box-shadow:inset 0 0 0 .5px #ece4f2;"><svg width="98.5" height="55" viewBox="0 0 98.5 55"><defs><linearGradient id="g31a" x1="0" y1="0" x2="1" y2=".4"><stop offset="0" stop-color="#b678f2"/><stop offset=".6" stop-color="#d49cf2"/><stop offset="1" stop-color="#f2c6f0"/></linearGradient><linearGradient id="g31b" x1=".15" y1="0" x2=".85" y2="1"><stop offset="0" stop-color="#bd82f4"/><stop offset=".55" stop-color="#e892e0"/><stop offset="1" stop-color="#fba6cc"/></linearGradient><linearGradient id="g31c" x1="0" y1="0" x2="1" y2="0"><stop offset="0" stop-color="#c992f2"/><stop offset=".3" stop-color="#e8b4f2"/><stop offset=".6" stop-color="#fbe6f6"/><stop offset=".8" stop-color="#f4c2ec"/><stop offset="1" stop-color="#c27af0"/></linearGradient><linearGradient id="g31d" x1="0" y1="0" x2="0" y2="1"><stop offset="0" stop-color="#fff" stop-opacity="1"/><stop offset=".45" stop-color="#fff" stop-opacity="1"/><stop offset="1" stop-color="#fff" stop-opacity="0"/></linearGradient><linearGradient id="g31e" x1="0" y1="0" x2="1" y2="0"><stop offset="0" stop-color="#fff" stop-opacity="0"/><stop offset=".55" stop-color="#f6c4ec" stop-opacity=".85"/><stop offset="1" stop-color="#dba2f2"/></linearGradient><filter id="bl31" x="-20%" y="-20%" width="140%" height="140%"><feGaussianBlur stdDeviation="1.2"/></filter></defs><mask id="mk31"><rect x="-4" y="26" width="108" height="34" fill="url(#g31d)" transform="translate(0 86) scale(1 -1)"/></mask><rect x="48" y="-2" width="54" height="60" fill="url(#g31e)"/><rect x="-4" y="26" width="108" height="34" fill="url(#g31c)" mask="url(#mk31)"/><path d="M76 58 Q78 40 102 36 V58Z" fill="#c684f0" filter="url(#bl31)"/><circle cx="41" cy="-4.5" r="14.4" fill="url(#g31a)" filter="url(#bl31)"/><circle cx="68.2" cy="23.4" r="14.4" fill="url(#g31b)" filter="url(#bl31)"/><rect x="85" y="4.7" width="8.4" height=".7" fill="#fff"/><rect x="85" y="6.5" width="8.4" height=".7" fill="#fff"/><rect x="85" y="8.3" width="8.4" height=".7" fill="#fff"/><text class="cj" x="5.91" y="25.61" font-size="5" font-weight="bold" fill="#3a3a3a" textLength="44.4" lengthAdjust="spacingAndGlyphs">顧客体験を科学する</text><text class="cj" x="6.36" y="33.20" font-size="5" fill="#777" textLength="48.2" lengthAdjust="spacingAndGlyphs">マーケティングテック</text><rect x="19.4" y="44" width="10" height=".9" fill="#f4d4f6" opacity=".9"/><circle cx="10.6" cy="44.3" r="7.2" fill="#fff"/><path d="M9.4 41.699999999999996 H12.2 Q13.6 41.699999999999996 13.6 43.099999999999994 V45.3" fill="none" stroke="#1a1a1a" stroke-width=".9" stroke-linecap="round"/><rect x="7.6" y="42.699999999999996" width="4.8" height="4.6" rx="1.4" fill="none" stroke="#1a1a1a" stroke-width="1.1"/><defs><linearGradient id="bc2" x1="0" y1="0" x2="1" y2="1"><stop offset="0" stop-color="#e23d96"/><stop offset="1" stop-color="#6a3fd2"/></linearGradient></defs><circle cx="87.7" cy="44.3" r="7.2" fill="#fff"/><g transform="translate(83.60000000000001 41.099999999999994)"><path d="M0.49199999999999994 1.1159999999999999 L2.214 2.604 L4.1 0.12400000000000001 L5.986 2.604 L7.707999999999999 1.1159999999999999 L7.052 5.332 Q6.969999999999999 6.076 6.068 6.076 L2.1319999999999997 6.076 Q1.2299999999999998 6.076 1.148 5.332Z" fill="url(#bc2)"/></g></svg></div>
<div class="a" style="left:88.75px;top:428.75px;width:98.5px;height:55px;border-radius:3px;overflow:hidden;background:#e5e5e5;box-shadow:inset 0 0 0 .5px #d6d6d6;"><svg width="98.5" height="55" viewBox="0 0 98.5 55"><path d="M56 10 L41 55 H98.5 V10Z" fill="#f3f3f3"/><path d="M56 10 L41 55 H44.5 L59.5 10Z" fill="#fff"/><rect x="0" y=".3" width="98.5" height="10.2" fill="#3c3c3c"/><text x="4.7" y="7.9" font-family="Liberation Sans, sans-serif" font-size="5.4" font-weight="bold" fill="#fff" text-anchor="start" textLength="32" lengthAdjust="spacingAndGlyphs" >20XX~20XX</text><text class="cj" x="39.31" y="7.89" font-size="5.5" font-weight="bold" fill="#fff" textLength="54.5" lengthAdjust="spacingAndGlyphs">従業員満足度の年次比較</text><rect x="7.4" y="39" width="6.8" height="9.5" fill="#4a4a4a"/><rect x="16.3" y="32.1" width="6.9" height="16.4" fill="#7c7c7c"/><rect x="25.3" y="20.5" width="6.8" height="28" fill="#a9a9a9"/><rect x="34.2" y="16.3" width="6.9" height="32.2" fill="#d0d0d0"/><rect x="9.3" y="37.4" width="3" height=".8" fill="#666" opacity=".7"/><rect x="18.2" y="30.5" width="3" height=".8" fill="#666" opacity=".7"/><rect x="27.2" y="18.9" width="3" height=".8" fill="#666" opacity=".7"/><rect x="36.1" y="14.7" width="3" height=".8" fill="#666" opacity=".7"/><rect x="7" y="51.2" width="36" height="1" fill="#555" opacity=".55"/><text class="cj" x="65.49" y="19.05" font-size="4.4" font-weight="bold" fill="#222" textLength="11.7" lengthAdjust="spacingAndGlyphs">まとめ</text><path d="M49.5 22.85 h44.3" stroke="#1c1c1c" stroke-width="1.9" stroke-dasharray="1.45 .3" opacity="0.66" fill="none"/><path d="M49.5 26.28 h44.3" stroke="#1c1c1c" stroke-width="1.9" stroke-dasharray="1.45 .3" opacity="0.66" fill="none"/><path d="M49.5 29.71 h44.3" stroke="#1c1c1c" stroke-width="1.9" stroke-dasharray="1.45 .3" opacity="0.66" fill="none"/><path d="M49.5 33.14 h44.3" stroke="#1c1c1c" stroke-width="1.9" stroke-dasharray="1.45 .3" opacity="0.66" fill="none"/><path d="M49.5 36.57 h44.3" stroke="#1c1c1c" stroke-width="1.9" stroke-dasharray="1.45 .3" opacity="0.66" fill="none"/><path d="M49.5 40.00 h44.3" stroke="#1c1c1c" stroke-width="1.9" stroke-dasharray="1.45 .3" opacity="0.66" fill="none"/><path d="M49.5 43.43 h44.3" stroke="#1c1c1c" stroke-width="1.9" stroke-dasharray="1.45 .3" opacity="0.66" fill="none"/><path d="M49.5 46.86 h44.3" stroke="#1c1c1c" stroke-width="1.9" stroke-dasharray="1.45 .3" opacity="0.66" fill="none"/><path d="M49.5 50.29 h30" stroke="#1c1c1c" stroke-width="1.9" stroke-dasharray="1.45 .3" opacity="0.66" fill="none"/></svg></div>
<div class="a" style="left:194.5px;top:428.75px;width:98.5px;height:55px;border-radius:3px;overflow:hidden;background:#f4f4f0;box-shadow:inset 0 0 0 .5px #dcdcd6;"><svg width="98.5" height="55" viewBox="0 0 98.5 55"><path d="M70 55 L98.5 30 V33 L74 55Z M78 55 L98.5 38 V41 L82 55Z" fill="#f0e6a8" opacity=".6"/><text class="cj" x="23.97" y="7.75" font-size="5.4" font-weight="bold" fill="#3a3a3a" textLength="51.4" lengthAdjust="spacingAndGlyphs">商品別売上の月別推移</text><rect x="4" y="9.6" width="90" height=".4" fill="#bdbdb5"/><rect x="5.4" y="13.5" width="39.3" height="39.7" fill="#8d8d8d"/><rect x="9" y="18" width="33" height=".25" fill="#fff" opacity=".35"/><rect x="9" y="24" width="33" height=".25" fill="#fff" opacity=".35"/><rect x="9" y="30" width="33" height=".25" fill="#fff" opacity=".35"/><rect x="9" y="36" width="33" height=".25" fill="#fff" opacity=".35"/><rect x="14.7" y="18" width="6.2" height="23.8" fill="#2f7d34"/><rect x="21.9" y="23.2" width="5.2" height="18.6" fill="#5dbb2f"/><rect x="28.5" y="32.1" width="4.2" height="9.7" fill="#6fcf36"/><rect x="33.7" y="25.9" width="5.2" height="15.9" fill="#a8e24c"/><rect x="12" y="47" width="3" height="1.2" fill="#5dbb2f"/><rect x="22" y="47" width="3" height="1.2" fill="#a8e24c"/><rect x="30" y="47" width="6" height=".9" fill="#ddd" opacity=".7"/><path d="M54.2 15.6 l1.1 -1.1 l1.1 1.1 l-1.1 1.1Z" fill="#222"/><rect x="57.6" y="15.1" width="11" height="1" fill="#333" opacity=".8"/><rect x="57.6" y="18.2" width="34" height=".8" fill="#555" opacity=".55"/><rect x="57.6" y="20.4" width="27" height=".8" fill="#555" opacity=".55"/><path d="M54.2 25.3 l1.1 -1.1 l1.1 1.1 l-1.1 1.1Z" fill="#222"/><rect x="57.6" y="24.8" width="11" height="1" fill="#333" opacity=".8"/><rect x="57.6" y="27.900000000000002" width="34" height=".8" fill="#555" opacity=".55"/><rect x="57.6" y="30.1" width="27" height=".8" fill="#555" opacity=".55"/><path d="M54.2 35 l1.1 -1.1 l1.1 1.1 l-1.1 1.1Z" fill="#222"/><rect x="57.6" y="34.5" width="11" height="1" fill="#333" opacity=".8"/><rect x="57.6" y="37.6" width="34" height=".8" fill="#555" opacity=".55"/><rect x="57.6" y="39.8" width="27" height=".8" fill="#555" opacity=".55"/><path d="M54.2 44.9 l1.1 -1.1 l1.1 1.1 l-1.1 1.1Z" fill="#222"/><rect x="57.6" y="44.4" width="11" height="1" fill="#333" opacity=".8"/><rect x="57.6" y="47.5" width="34" height=".8" fill="#555" opacity=".55"/><rect x="57.6" y="49.699999999999996" width="27" height=".8" fill="#555" opacity=".55"/></svg></div>
<div class="a" style="left:88.75px;top:491.0px;width:98.5px;height:55px;border-radius:3px;overflow:hidden;background:#fff;"><svg width="98.5" height="55" viewBox="0 0 98.5 55"><defs><linearGradient id="g50" x1="0" y1="0" x2="0" y2="1"><stop offset="0" stop-color="#f4e43c"/><stop offset=".45" stop-color="#f4e43c"/><stop offset=".7" stop-color="#6aa2dc"/><stop offset="1" stop-color="#4f90d6"/></linearGradient></defs><rect x=".75" y=".75" width="97" height="53.5" rx="2.4" fill="#fff" stroke="url(#g50)" stroke-width="1.5"/><text x="3.2" y="8.6" font-family="Liberation Serif, serif" font-size="6.2" fill="#5b9bd5" text-anchor="start" >01</text><rect x="9.8" y="3.4" width=".4" height="5.6" fill="#5b9bd5"/><text class="cj" x="11.29" y="7.94" font-size="4.6" fill="#6aa8d8" textLength="38.1" lengthAdjust="spacingAndGlyphs">新規会員ユーザー属性</text><rect x="52.6" y="3.2" width=".3" height="7.4" fill="#9cc4e4"/><rect x="54.4" y="4.20" width="39" height="0.8" fill="#7fb0d8" opacity="0.6"/><rect x="54.4" y="7.10" width="24" height="0.8" fill="#7fb0d8" opacity="0.6"/><path d="M49.5 30.2 L49.50 12.10 A18.1 18.1 0 0 1 66.28 36.98Z" fill="#c9e6f3"/><path d="M49.5 30.2 L66.28 36.98 A18.1 18.1 0 0 1 49.50 48.30Z" fill="#c6c7cb"/><path d="M49.5 30.2 L49.50 48.30 A18.1 18.1 0 0 1 39.38 45.21Z" fill="#4a9be2"/><path d="M49.5 30.2 L39.38 45.21 A18.1 18.1 0 0 1 49.50 12.10Z" fill="#ffee05"/><rect x="21.4" y="50.4" width="21" height=".8" fill="#888" opacity=".55"/><rect x="50" y="50.4" width="10" height=".8" fill="#888" opacity=".55"/><rect x="66" y="50.4" width="12" height=".8" fill="#e2c928" opacity=".8"/></svg></div>
<div class="a" style="left:194.5px;top:491.0px;width:98.5px;height:55px;border-radius:3px;overflow:hidden;background:#105eb6;"><svg width="98.5" height="55" viewBox="0 0 98.5 55"><g transform="scale(0.16866 0.16768)"><defs>
<linearGradient id="t5p2" x1="0" y1="0" x2="1" y2="0"><stop offset="0" stop-color="#1460bc"/><stop offset=".45" stop-color="#196dc9"/><stop offset=".8" stop-color="#3a92dc"/><stop offset="1" stop-color="#5cb2ea"/></linearGradient>
<linearGradient id="t5p1" x1="0" y1="0" x2="1" y2="0"><stop offset="0" stop-color="#c4e2f6"/><stop offset=".45" stop-color="#eaf3fb"/><stop offset="1" stop-color="#f4f8fc"/></linearGradient>
<linearGradient id="t5d1" x1="0" y1="0" x2="0" y2="1"><stop offset="0" stop-color="#3f8fd6"/><stop offset=".5" stop-color="#74b3e2"/><stop offset="1" stop-color="#4b96d4"/></linearGradient>
<linearGradient id="t5t1" x1="0" y1="0" x2="0" y2="1"><stop offset="0" stop-color="#6fb4e4"/><stop offset="1" stop-color="#3c8cd4"/></linearGradient>
<linearGradient id="t5p3" x1="0" y1="1" x2="1" y2="0"><stop offset="0" stop-color="#86bee6"/><stop offset="1" stop-color="#a9d5f1"/></linearGradient>
<linearGradient id="t5r1" x1="0" y1="0" x2="1" y2="1"><stop offset="0" stop-color="#bfe2f7"/><stop offset=".6" stop-color="#a3d3f2"/><stop offset="1" stop-color="#8cc6ee"/></linearGradient>
<linearGradient id="t5r2" x1="0" y1="0" x2="1" y2="0"><stop offset="0" stop-color="#86c4ee"/><stop offset="1" stop-color="#5ea9e0"/></linearGradient>
<linearGradient id="t5w1" x1="0" y1="0" x2="0" y2="1"><stop offset="0" stop-color="#e6f0f9"/><stop offset="1" stop-color="#f3f6fa"/></linearGradient>
<pattern id="t5tx" width="3" height="3" patternUnits="userSpaceOnUse"><rect width="3" height="3" fill="#0f6dd0"/><circle cx="1.5" cy="1.5" r=".7" fill="#0b60bf"/></pattern>
<clipPath id="t5cq"><path d="M535 245 L584 245 L584 328 L491 328Z"/></clipPath>
</defs><path d="M387 0 L505 0 L552 82 L342.5 82Z" fill="#8fc8ec"/><path d="M387 0 L470 0 L424 81Z" fill="#a7daf6"/><path d="M387 0 L342.5 82 L424 81Z" fill="#8ac3e8"/><path d="M505 0 L584 0 L584 82 L552 82Z" fill="#0e6acc"/><path d="M343 82 L299 163 L390 163Z" fill="url(#t5t1)"/><path d="M343 82 L424 82 L390 163Z" fill="#88c7ee"/><path d="M518 82 L584 82 L584 245 L535 245 L514 241 L474 163Z" fill="url(#t5r1)"/><path d="M518 82 L564 162 L584 131 L584 82Z" fill="#a9d8f4"/><path d="M518 82 L538 117 L550 82Z" fill="#8fc9ee"/><path d="M584 134 L566 164 L575 168 L535 245 L584 245Z" fill="url(#t5r2)"/><path d="M424 82 L518 82 L474 163.5 L390 163Z" fill="url(#t5p1)"/><path d="M298 164 L345 241 L347.6 251 L308.5 321 L258 239Z" fill="url(#t5d1)"/><path d="M300 164 L474 164 L514 241.5 L346 241.5Z" fill="url(#t5p2)"/><path d="M258 239 L208 328 L311 328Z" fill="#1666be"/><path d="M346 242 L436 242 L383 328 L311 328 L308.5 321 L347.6 251Z" fill="url(#t5p3)"/><path d="M438 243 L536 243 L491.5 328Z" fill="#9dd0f2"/><path d="M433 243 L441 243 L492.5 328 L381 328Z" fill="url(#t5w1)"/><path d="M535 245 L584 245 L584 328 L491 328Z" fill="#0e6acc"/><circle cx="580" cy="354" r="86" fill="#0d4b96" clip-path="url(#t5cq)"/><path d="M298.5 164 L208 328" stroke="#e4f1fc" stroke-width="1.35" fill="none" stroke-linecap="round" opacity=".8"/><path d="M298.5 164 L345.5 241.5 M258 238.6 L311.5 327" stroke="#e4f1fc" stroke-width="1.35" fill="none" stroke-linecap="round"/><path d="M298.5 164 L474 164 L514 241.5" stroke="#e4f1fc" stroke-width="1.35" fill="none" stroke-linecap="round"/><path d="M345.5 242 L535 244" stroke="#e4f1fc" stroke-width="1.35" fill="none" stroke-linecap="round"/><path d="M575 168 L491 328" stroke="#e4f1fc" stroke-width="1.35" fill="none" stroke-linecap="round"/></g><rect x="5.2" y="5" width="12" height="5.4" fill="none" stroke="#fff" stroke-width=".45"/><text class="cj" x="6.53" y="8.88" font-size="3.1" font-weight="bold" fill="#fff" textLength="9.2" lengthAdjust="spacingAndGlyphs">部外秘</text><text class="cj" x="5.23" y="20.99" font-size="4.35" font-weight="bold" fill="#fff" textLength="42.6" lengthAdjust="spacingAndGlyphs">マーケティングの進化を</text><text class="cj" x="5.28" y="27.55" font-size="4.35" font-weight="bold" fill="#fff" textLength="35.1" lengthAdjust="spacingAndGlyphs">支えるテクノロジー</text><rect x="19" y="44.2" width="9" height=".9" fill="#fff" opacity=".8"/><circle cx="10.5" cy="44.7" r="7.2" fill="#fff"/><path d="M9.3 42.1 H12.1 Q13.5 42.1 13.5 43.5 V45.7" fill="none" stroke="#1a1a1a" stroke-width=".9" stroke-linecap="round"/><rect x="7.5" y="43.1" width="4.8" height="4.6" rx="1.4" fill="none" stroke="#1a1a1a" stroke-width="1.1"/><defs><linearGradient id="bc3" x1="0" y1="0" x2="1" y2="1"><stop offset="0" stop-color="#e23d96"/><stop offset="1" stop-color="#6a3fd2"/></linearGradient></defs><circle cx="88.1" cy="44.7" r="7.2" fill="#fff"/><g transform="translate(84.0 41.5)"><path d="M0.49199999999999994 1.1159999999999999 L2.214 2.604 L4.1 0.12400000000000001 L5.986 2.604 L7.707999999999999 1.1159999999999999 L7.052 5.332 Q6.969999999999999 6.076 6.068 6.076 L2.1319999999999997 6.076 Q1.2299999999999998 6.076 1.148 5.332Z" fill="url(#bc3)"/></g></svg></div>
<div class="a" style="left:88.75px;top:553.25px;width:98.5px;height:55px;border-radius:3px;overflow:hidden;background:#fbfaf5;box-shadow:inset 0 0 0 .5px #e6e4dc;"><svg width="98.5" height="55" viewBox="0 0 98.5 55"><defs><linearGradient id="g60" x1="0" y1="0" x2="0" y2="1"><stop offset="0" stop-color="#cdeaf2"/><stop offset=".5" stop-color="#74cde2"/><stop offset="1" stop-color="#27aed0"/></linearGradient></defs><rect x="3.6" y="4.9" width="26" height=".3" fill="#999"/><rect x="69" y="4.9" width="26" height=".3" fill="#999"/><text class="cj" x="30.86" y="6.29" font-size="3.4" fill="#333" textLength="36.6" lengthAdjust="spacingAndGlyphs">【プロジェクトの進捗状況】</text><rect x="7.1" y="14.2" width="6.9" height="2.9" rx=".3" fill="#111"/><text class="cj" x="6.99" y="23.20" font-size="5.3" font-weight="bold" fill="#111" textLength="28.7" lengthAdjust="spacingAndGlyphs">進捗工程は現在</text><text x="37.4" y="23.1" font-family="Liberation Sans, sans-serif" font-size="5.4" font-weight="bold" fill="#111" text-anchor="start" textLength="8.8" lengthAdjust="spacingAndGlyphs" >35%</text><text class="cj" x="47.90" y="23.20" font-size="5.3" font-weight="bold" fill="#111" textLength="7.3" lengthAdjust="spacingAndGlyphs">完了</text><path d="M7.1 26.55 h48.4" stroke="#1c1c1c" stroke-width="1.9" stroke-dasharray="1.45 .3" opacity="0.62" fill="none"/><path d="M7.1 30.65 h48.4" stroke="#1c1c1c" stroke-width="1.9" stroke-dasharray="1.45 .3" opacity="0.62" fill="none"/><path d="M7.1 34.75 h39.8" stroke="#1c1c1c" stroke-width="1.9" stroke-dasharray="1.45 .3" opacity="0.62" fill="none"/><circle cx="76.9" cy="26.4" r="11.3" fill="none" stroke="#d5e9f3" stroke-width="6.9"/><path d="M78.47 15.21 A11.3 11.3 0 0 1 86.48 32.39" fill="none" stroke="#1fb0d5" stroke-width="6.9" stroke-linecap="round"/><text x="76.9" y="28.8" font-family="Liberation Sans, sans-serif" font-size="6.4" font-weight="bold" fill="#49a9d2" text-anchor="middle" textLength="11.4" lengthAdjust="spacingAndGlyphs" >35%</text><path d="M0 48.20 Q1.90 46.92 3.80 48.20 Q5.70 49.48 7.60 48.20 Q9.50 46.92 11.40 48.20 Q13.30 49.48 15.20 48.20 Q17.10 46.92 19.00 48.20 Q20.90 49.48 22.80 48.20 Q24.70 46.92 26.60 48.20 Q28.50 49.48 30.40 48.20 Q32.30 46.92 34.20 48.20 Q36.10 49.48 38.00 48.20 Q39.90 46.92 41.80 48.20 Q43.70 49.48 45.60 48.20 Q47.50 46.92 49.40 48.20 Q51.30 49.48 53.20 48.20 Q55.10 46.92 57.00 48.20 Q58.90 49.48 60.80 48.20 Q62.70 46.92 64.60 48.20 Q66.50 49.48 68.40 48.20 Q70.30 46.92 72.20 48.20 Q74.10 49.48 76.00 48.20 Q77.90 46.92 79.80 48.20 Q81.70 49.48 83.60 48.20 Q85.50 46.92 87.40 48.20 Q89.30 49.48 91.20 48.20 Q93.10 46.92 95.00 48.20 Q96.90 49.48 98.80 48.20 V55 H0Z" fill="url(#g60)"/><path d="M0 51.20 Q2.35 50.24 4.70 51.20 Q7.05 52.16 9.40 51.20 Q11.75 50.24 14.10 51.20 Q16.45 52.16 18.80 51.20 Q21.15 50.24 23.50 51.20 Q25.85 52.16 28.20 51.20 Q30.55 50.24 32.90 51.20 Q35.25 52.16 37.60 51.20 Q39.95 50.24 42.30 51.20 Q44.65 52.16 47.00 51.20 Q49.35 50.24 51.70 51.20 Q54.05 52.16 56.40 51.20 Q58.75 50.24 61.10 51.20 Q63.45 52.16 65.80 51.20 Q68.15 50.24 70.50 51.20 Q72.85 52.16 75.20 51.20 Q77.55 50.24 79.90 51.20 Q82.25 52.16 84.60 51.20 Q86.95 50.24 89.30 51.20 Q91.65 52.16 94.00 51.20 Q96.35 50.24 98.70 51.20 V55 H0Z" fill="#39b6d4" opacity=".7"/></svg></div>
<div class="a" style="left:194.5px;top:553.25px;width:98.5px;height:55px;border-radius:3px;overflow:hidden;background:#f3f6f8;"><svg width="98.5" height="55" viewBox="0 0 98.5 55"><rect x=".7" y=".7" width="97.1" height="53.6" rx="2.4" fill="#f3f6f8" stroke="#8fd0c6" stroke-width="1.4"/><rect x="8.5" y="34.1" width="7.6" height="7.8" fill="#3f9fc2"/><rect x="18.2" y="29.9" width="7.9" height="12" fill="#1f5fa0"/><rect x="28.1" y="25.4" width="7.9" height="16.5" fill="#1d2d5e"/><rect x="37.6" y="12.3" width="8.1" height="29.6" fill="#a3e2d4"/><rect x="6.6" y="42" width="41" height=".3" fill="#999"/><rect x="9" y="43.8" width="6.4" height=".8" fill="#777" opacity=".55"/><rect x="19" y="43.8" width="6.4" height=".8" fill="#777" opacity=".55"/><rect x="28.8" y="43.8" width="6.4" height=".8" fill="#777" opacity=".55"/><rect x="38.4" y="43.8" width="6.4" height=".8" fill="#777" opacity=".55"/><rect x="52" y="15" width="28" height=".9" fill="#f1d66a" opacity=".9"/><text class="cj" x="51.61" y="24.13" font-size="5.1" fill="#3a4058" textLength="40.6" lengthAdjust="spacingAndGlyphs">時間帯別アクセス数</text><rect x="52" y="29.60" width="36" height="1.0" fill="#556" opacity="0.6"/><rect x="52" y="33.80" width="36" height="1.0" fill="#556" opacity="0.6"/><rect x="52" y="38.00" width="15" height="1.0" fill="#556" opacity="0.6"/></svg></div>
<div class="a" style="left:88.75px;top:615.5px;width:98.5px;height:55px;border-radius:3px;overflow:hidden;background:#f8f3dc;"><svg width="98.5" height="55" viewBox="0 0 98.5 55"><rect width="98.5" height="3" fill="#f6f0d4"/><circle cx="3" cy="3" r="4" fill="#f0d060"/></svg></div>
<div class="a" style="left:194.5px;top:615.5px;width:98.5px;height:55px;border-radius:3px;overflow:hidden;background:#2f80b0;"><svg width="98.5" height="55" viewBox="0 0 98.5 55"><defs><linearGradient id="g71" x1="0" y1="0" x2="1" y2="0"><stop offset="0" stop-color="#3f9fb4"/><stop offset=".35" stop-color="#2f80b0"/><stop offset=".52" stop-color="#1c2a80"/><stop offset=".62" stop-color="#2a8ab0"/><stop offset="1" stop-color="#7fd0c8"/></linearGradient></defs><rect width="98.5" height="55" fill="url(#g71)"/></svg></div>
<div class="a" style="left:312.4px;top:46px;width:11.6px;height:571px;background:#fafafa;"></div>
<svg class="ic" style="left:314.8px;top:52.2px" width="6.4" height="3.6" viewBox="0 0 6.4 3.6" ><path d="M0 3.6 L3.2 0 L6.4 3.6Z" fill="#7d7d7d"/></svg>
<div class="a" style="left:314.8px;top:61.4px;width:6.5px;height:94px;background:#8b8b8b;border-radius:3.3px;"></div>
<svg class="ic" style="left:314.8px;top:607px" width="6.4" height="3.6" viewBox="0 0 6.4 3.6" ><path d="M0 0 L3.2 3.6 L6.4 0Z" fill="#7d7d7d"/></svg>
</aside>
<main>
<div class="a" style="left:324.2px;top:86px;width:719.8px;height:447.6px;background:#e6e6e6;background:linear-gradient(180deg,#e6e6e6 0,#e6e6e6 98.6%,#dedede 100%);"></div>
<svg class="ic" style="left:342.4px;top:59px" width="14" height="14" viewBox="0 0 14 14" ><rect x=".9" y=".9" width="11.8" height="11.8" rx="3.2" fill="none" stroke="#161616" stroke-width="1.9" stroke-linecap="round" stroke-linejoin="round"/><path d="M5.4 8.4 L9.4 4.4 M6.6 4.2 H9.6 V7.2" fill="none" stroke="#161616" stroke-width="1.7" stroke-linecap="round" stroke-linejoin="round"/><path d="M3 7.6 V10.6 H6" fill="none" stroke="#161616" stroke-width="1.5" stroke-linecap="round" stroke-linejoin="round" stroke-dasharray="1.4 1.4"/></svg>
<svg class="ic" style="left:350px;top:49px" width="16" height="16" viewBox="0 0 16 16" ><defs><linearGradient id="cb1" x1="0" y1="0" x2="1" y2="1"><stop offset="0" stop-color="#d93a9e"/><stop offset=".5" stop-color="#9a3fc8"/><stop offset="1" stop-color="#5a44d6"/></linearGradient></defs><circle cx="8" cy="7.7" r="6.8" fill="url(#cb1)"/><g transform="translate(3.51 4.17)"><path d="M0.53856 1.19952 L2.4235200000000003 2.7988799999999996 L4.488 0.13328 L6.55248 2.7988799999999996 L8.43744 1.19952 L7.719360000000001 5.731039999999999 Q7.629600000000001 6.53072 6.64224 6.53072 L2.3337600000000003 6.53072 Q1.3464 6.53072 1.2566400000000002 5.731039999999999Z" fill="#fff"/></g></svg>
<svg class="ic" style="left:374px;top:59px" width="14.4" height="14.2" viewBox="0 0 14.4 14.2" ><path d="M7.2 .9 C3.4 .9 .9 3.6 .9 7.1 C.9 10.6 3.6 13.2 7 13.2 C8.4 13.2 9 12.4 8.8 11.4 C8.6 10.2 9.4 9.4 10.6 9.6 C12.6 9.9 13.5 8.6 13.5 7 C13.5 3.4 10.8 .9 7.2 .9Z" fill="none" stroke="#161616" stroke-width="1.9" stroke-linecap="round" stroke-linejoin="round"/><circle cx="4.3" cy="5.2" r=".95" fill="#161616"/><circle cx="7.3" cy="3.8" r=".95" fill="#161616"/><circle cx="10.2" cy="5.4" r=".95" fill="#161616"/><circle cx="4.4" cy="8.8" r=".95" fill="#161616"/></svg>
<svg class="ic" style="left:405.6px;top:59px" width="15.2" height="14" viewBox="0 0 15.2 14" ><circle cx="10.6" cy="9.4" r="3.3" fill="none" stroke="#161616" stroke-width="1.9" stroke-linecap="round" stroke-linejoin="round"/><path d="M6.6 8.6 C4.4 8 3.2 6.4 3.2 4.6" fill="none" stroke="#161616" stroke-width="1.8" stroke-linecap="round" stroke-linejoin="round"/><path d="M1.2 2.2 L3.4 1 L4.4 3.4" fill="none" stroke="#161616" stroke-width="1.6" stroke-linecap="round" stroke-linejoin="round"/><circle cx="6.2" cy="4" r=".8" fill="#161616"/></svg>
<svg class="ic" style="left:438.3px;top:59.5px" width="13.4" height="13.2" viewBox="0 0 13.4 13.2" ><rect x=".8" y=".8" width="11.8" height="11.6" rx="3.2" fill="none" stroke="#6b6b6b" stroke-width="1.3" stroke-linecap="round" stroke-linejoin="round"/></svg>
<svg class="ic" style="left:469.8px;top:59px" width="14" height="14" viewBox="0 0 14 14" ><rect x=".9" y=".9" width="12.2" height="12" rx="3.2" fill="none" stroke="#161616" stroke-width="2.0" stroke-linecap="round" stroke-linejoin="round"/><rect x="3.9" y="3.9" width="6.2" height="6" rx="1.6" fill="none" stroke="#161616" stroke-width="1.6" stroke-linecap="round" stroke-linejoin="round"/><path d="M4.4 9 L6.4 6.8 L8 8.4 L9.6 7.4 V9.6 H4.4Z" fill="#161616"/></svg>
<svg class="ic" style="left:502px;top:59px" width="14" height="14" viewBox="0 0 14 14" ><path d="M.9 7.4 V3.2 Q.9 .9 3.2 .9 H8.4" fill="none" stroke="#161616" stroke-width="1.7" stroke-linecap="round" stroke-linejoin="round"/><path d="M3.4 9.8 V5.6 Q3.4 3.4 5.6 3.4 H10.6" fill="none" stroke="#161616" stroke-width="1.7" stroke-linecap="round" stroke-linejoin="round"/><rect x="5.9" y="5.9" width="7.2" height="7.2" rx="2.6" fill="none" stroke="#161616" stroke-width="1.9" stroke-linecap="round" stroke-linejoin="round"/><path d="M9.5 6.4 V9.5 H12.6" fill="none" stroke="#161616" stroke-width="1.5" stroke-linecap="round" stroke-linejoin="round"/></svg>
<svg class="ic" style="left:509.3px;top:49.3px" width="16" height="16" viewBox="0 0 16 16" ><defs><linearGradient id="cb2" x1="0" y1="0" x2="1" y2="1"><stop offset="0" stop-color="#d93a9e"/><stop offset=".5" stop-color="#9a3fc8"/><stop offset="1" stop-color="#5a44d6"/></linearGradient></defs><circle cx="8" cy="7.7" r="6.8" fill="url(#cb2)"/><g transform="translate(3.51 4.17)"><path d="M0.53856 1.19952 L2.4235200000000003 2.7988799999999996 L4.488 0.13328 L6.55248 2.7988799999999996 L8.43744 1.19952 L7.719360000000001 5.731039999999999 Q7.629600000000001 6.53072 6.64224 6.53072 L2.3337600000000003 6.53072 Q1.3464 6.53072 1.2566400000000002 5.731039999999999Z" fill="#fff"/></g></svg>
<svg class="ic" style="left:533.3px;top:59px" width="14.4" height="14" viewBox="0 0 14.4 14" ><rect x=".8" y=".8" width="4.6" height="4.6" rx="1.2" fill="none" stroke="#161616" stroke-width="1.8" stroke-linecap="round" stroke-linejoin="round"/><rect x="8.8" y="8.6" width="4.6" height="4.6" rx="1.2" fill="none" stroke="#161616" stroke-width="1.8" stroke-linecap="round" stroke-linejoin="round"/><path d="M8.2 2.6 H10.6 Q12 2.6 12 4 V5.6 M10.2 4 L12 5.9 L13.8 4" fill="none" stroke="#161616" stroke-width="1.7" stroke-linecap="round" stroke-linejoin="round"/><path d="M6 11.2 H3.6 Q2.2 11.2 2.2 9.8 V8.2 M.6 9.8 L2.2 7.9 L4 9.8" fill="none" stroke="#161616" stroke-width="1.7" stroke-linecap="round" stroke-linejoin="round"/></svg>
<svg class="ic" style="left:565.6px;top:60px" width="13.4" height="12.4" viewBox="0 0 13.4 12.4" ><path d="M.8 2.2 H7 M3.9 .8 V2.2 M1.6 7.6 C4 6.4 5.4 4.6 5.8 2.4 M2.2 2.4 C2.6 4.6 4 6.4 6.4 7.6" fill="none" stroke="#161616" stroke-width="1.6" stroke-linecap="round" stroke-linejoin="round"/><path d="M6.6 11.8 L9.6 4.2 L12.6 11.8 M7.7 9.2 H11.5" fill="none" stroke="#161616" stroke-width="1.8" stroke-linecap="round" stroke-linejoin="round"/></svg>
<span class="lt" style="left:391.00px;top:123.22px;font-size:11.2px;font-weight:bold;color:#262626;">1</span>
<span class="tl" style="left:400.3px;top:122.1px;font-size:10.8px;width:31.4px;color:#262626;font-weight:bold">ページ</span>
<span class="lt" style="left:435.00px;top:120.75px;font-size:14px;font-weight:bold;color:#262626;transform:scaleX(0.8579);transform-origin:0 0;">-</span>
<span class="tl" style="left:443.8px;top:121.9px;font-size:11.0px;width:76.2px;color:#959595">タイトルを追加</span>
<section>
<div class="a" style="left:392px;top:146px;width:584px;height:328px;background:#105eb6;overflow:hidden"><svg width="584" height="328" viewBox="0 0 584 328"><defs>
<linearGradient id="mp2" x1="0" y1="0" x2="1" y2="0"><stop offset="0" stop-color="#1460bc"/><stop offset=".45" stop-color="#196dc9"/><stop offset=".8" stop-color="#3a92dc"/><stop offset="1" stop-color="#5cb2ea"/></linearGradient>
<linearGradient id="mp1" x1="0" y1="0" x2="1" y2="0"><stop offset="0" stop-color="#c4e2f6"/><stop offset=".45" stop-color="#eaf3fb"/><stop offset="1" stop-color="#f4f8fc"/></linearGradient>
<linearGradient id="md1" x1="0" y1="0" x2="0" y2="1"><stop offset="0" stop-color="#3f8fd6"/><stop offset=".5" stop-color="#74b3e2"/><stop offset="1" stop-color="#4b96d4"/></linearGradient>
<linearGradient id="mt1" x1="0" y1="0" x2="0" y2="1"><stop offset="0" stop-color="#6fb4e4"/><stop offset="1" stop-color="#3c8cd4"/></linearGradient>
<linearGradient id="mp3" x1="0" y1="1" x2="1" y2="0"><stop offset="0" stop-color="#86bee6"/><stop offset="1" stop-color="#a9d5f1"/></linearGradient>
<linearGradient id="mr1" x1="0" y1="0" x2="1" y2="1"><stop offset="0" stop-color="#bfe2f7"/><stop offset=".6" stop-color="#a3d3f2"/><stop offset="1" stop-color="#8cc6ee"/></linearGradient>
<linearGradient id="mr2" x1="0" y1="0" x2="1" y2="0"><stop offset="0" stop-color="#86c4ee"/><stop offset="1" stop-color="#5ea9e0"/></linearGradient>
<linearGradient id="mw1" x1="0" y1="0" x2="0" y2="1"><stop offset="0" stop-color="#e6f0f9"/><stop offset="1" stop-color="#f3f6fa"/></linearGradient>
<pattern id="mtx" width="3" height="3" patternUnits="userSpaceOnUse"><rect width="3" height="3" fill="#0f6dd0"/><circle cx="1.5" cy="1.5" r=".7" fill="#0b60bf"/></pattern>
<clipPath id="mcq"><path d="M535 245 L584 245 L584 328 L491 328Z"/></clipPath>
</defs><path d="M387 0 L505 0 L552 82 L342.5 82Z" fill="#8fc8ec"/><path d="M387 0 L470 0 L424 81Z" fill="#a7daf6"/><path d="M387 0 L342.5 82 L424 81Z" fill="#8ac3e8"/><path d="M505 0 L584 0 L584 82 L552 82Z" fill="url(#mtx)"/><path d="M343 82 L299 163 L390 163Z" fill="url(#mt1)"/><path d="M343 82 L424 82 L390 163Z" fill="#88c7ee"/><path d="M518 82 L584 82 L584 245 L535 245 L514 241 L474 163Z" fill="url(#mr1)"/><path d="M518 82 L564 162 L584 131 L584 82Z" fill="#a9d8f4"/><path d="M518 82 L538 117 L550 82Z" fill="#8fc9ee"/><path d="M584 134 L566 164 L575 168 L535 245 L584 245Z" fill="url(#mr2)"/><path d="M424 82 L518 82 L474 163.5 L390 163Z" fill="url(#mp1)"/><path d="M298 164 L345 241 L347.6 251 L308.5 321 L258 239Z" fill="url(#md1)"/><path d="M300 164 L474 164 L514 241.5 L346 241.5Z" fill="url(#mp2)"/><path d="M258 239 L208 328 L311 328Z" fill="#1666be"/><path d="M346 242 L436 242 L383 328 L311 328 L308.5 321 L347.6 251Z" fill="url(#mp3)"/><path d="M438 243 L536 243 L491.5 328Z" fill="#9dd0f2"/><path d="M433 243 L441 243 L492.5 328 L381 328Z" fill="url(#mw1)"/><path d="M535 245 L584 245 L584 328 L491 328Z" fill="url(#mtx)"/><circle cx="580" cy="354" r="86" fill="#0d4b96" clip-path="url(#mcq)"/><path d="M298.5 164 L208 328" stroke="#e4f1fc" stroke-width="1.35" fill="none" stroke-linecap="round" opacity=".8"/><path d="M298.5 164 L345.5 241.5 M258 238.6 L311.5 327" stroke="#e4f1fc" stroke-width="1.35" fill="none" stroke-linecap="round"/><path d="M298.5 164 L474 164 L514 241.5" stroke="#e4f1fc" stroke-width="1.35" fill="none" stroke-linecap="round"/><path d="M345.5 242 L535 244" stroke="#e4f1fc" stroke-width="1.35" fill="none" stroke-linecap="round"/><path d="M575 168 L491 328" stroke="#e4f1fc" stroke-width="1.35" fill="none" stroke-linecap="round"/><rect x="543" y="293.2" width="14.4" height="13.4" rx="2.6" fill="#d3dcec"/><path d="M550.2 296.2 L546.6 303.8 H548.9 L550.2 300.9 L551.6 303.8 H553.9Z" fill="#0d4b96"/><text x="550.6" y="317.6" text-anchor="middle" font-family="Liberation Sans, sans-serif" font-weight="bold" font-size="8.9" fill="#d3dcec" textLength="55" lengthAdjust="spacingAndGlyphs">Adobe Express</text></svg><div class="a" style="left:37.8px;top:32.5px;width:58.8px;height:30.6px;border:1.6px solid rgba(205,230,255,.95)"></div></div>
<span class="tl" style="left:438.0px;top:185.5px;font-size:15px;width:44.3px;color:#fff;font-weight:bold">部外秘</span>
<span class="tl" style="left:427.9px;top:244.8px;font-size:23.6px;width:252.2px;color:#fff;font-weight:bold;letter-spacing:-0.6px">マーケティングの進化を</span>
<span class="tl" style="left:427.9px;top:279.3px;font-size:23.6px;width:207.5px;color:#fff;font-weight:bold;letter-spacing:-0.5px">支えるテクノロジー</span>
<span class="lt" style="left:430.60px;top:396.76px;font-size:14.1px;font-weight:bold;color:#fff;transform:scaleX(1.0196);transform-origin:0 0;">Intech Creations Inc.</span>
<span class="lt" style="left:430.60px;top:416.76px;font-size:14.1px;font-weight:bold;color:#fff;transform:scaleX(0.9779);transform-origin:0 0;">20XX.8.10</span>
</section>
<div class="a" style="left:977px;top:150px;width:44px;height:8px;background:#d2d2d2;border-radius:3px;border:1px solid #bdbdbd;box-sizing:border-box;"></div>
<div class="a" style="left:974.3px;top:102.4px;width:50.3px;height:48.6px;background:#d6d6d6;border-radius:4px;border:1px solid #c6c6c6;box-sizing:border-box;box-shadow:0 0 2px rgba(0,0,0,.12);"></div>
<div class="a" style="left:986.9px;top:114.4px;width:25.4px;height:25.4px;border-radius:50%;background:#fff"></div>
<svg class="ic" style="left:992.1px;top:120.4px" width="14.8" height="12.8" viewBox="0 0 14.8 12.8" ><path d="M2.2 1.2 V5 M.6 2.9 L2.2 1 L3.8 2.9 M2.2 7.8 V11.6 M.6 9.9 L2.2 11.8 L3.8 9.9" fill="none" stroke="#161616" stroke-width="1.4" stroke-linecap="round" stroke-linejoin="round"/><ellipse cx="9.8" cy="8.7" rx="4.1" ry="3" fill="#a4a4a4" stroke="#161616" stroke-width="1.6"/><ellipse cx="9.8" cy="4.1" rx="4.1" ry="3" fill="#fff" stroke="#161616" stroke-width="1.6"/></svg>
<div class="a" style="left:968.5px;top:493.7px;width:24px;height:24px;border-radius:50%;background:#fff;box-shadow:0 1px 4px rgba(0,0,0,.15)"></div>
<svg class="ic" style="left:974.3px;top:499.5px" width="12.4" height="12.4" viewBox="0 0 12.4 12.4" ><rect x="0.7" y="0.7" width="4.2" height="4.2" rx=".9" fill="none" stroke="#161616" stroke-width="1.4" stroke-linecap="round" stroke-linejoin="round"/><rect x="0.7" y="7.5" width="4.2" height="4.2" rx=".9" fill="none" stroke="#161616" stroke-width="1.4" stroke-linecap="round" stroke-linejoin="round"/><rect x="7.5" y="0.7" width="4.2" height="4.2" rx=".9" fill="none" stroke="#161616" stroke-width="1.4" stroke-linecap="round" stroke-linejoin="round"/><rect x="7.5" y="7.5" width="4.2" height="4.2" rx=".9" fill="none" stroke="#161616" stroke-width="1.4" stroke-linecap="round" stroke-linejoin="round"/></svg>
<div class="a" style="left:999.9px;top:493.7px;width:24px;height:24px;border-radius:50%;background:#fff;box-shadow:0 1px 4px rgba(0,0,0,.15)"></div>
<svg class="ic" style="left:1008px;top:503.6px" width="7.6" height="4.4" viewBox="0 0 7.6 4.4" ><path d="M.4 .4 L3.8 4.0 L7.199999999999999 .4" fill="none" stroke="#222" stroke-width="1.6" stroke-linecap="round" stroke-linejoin="round"/></svg>
<div class="a" style="left:333.4px;top:547.4px;width:24px;height:24px;background:#eaeaea;border-radius:4px;"></div>
<svg class="ic" style="left:338.6px;top:553.6px" width="13.4" height="12.2" viewBox="0 0 13.4 12.2" ><path d="M1.2 1.9 Q1.2 .7 2.2 1.3 L8.2 5.4 Q9 6 8.2 6.6 L2.2 10.7 Q1.2 11.3 1.2 10.1Z" fill="none" stroke="#161616" stroke-width="2.0" stroke-linecap="round" stroke-linejoin="round"/><path d="M9.6 2 L12.4 6 L9.6 10" fill="none" stroke="#9a9a9a" stroke-width="1.2" stroke-linecap="round" stroke-linejoin="round"/></svg>
<div class="a" style="left:333.4px;top:579.4px;width:24px;height:24px;background:#eaeaea;border-radius:4px;"></div>
<svg class="ic" style="left:338.7px;top:584.7px" width="13.2" height="13.2" viewBox="0 0 13.2 13.2" ><path d="M3.8 1 H9.4 Q12.2 1 12.2 3.8 V7.4 L7.4 12.2 H3.8 Q1 12.2 1 9.4 V3.8 Q1 1 3.8 1Z" fill="none" stroke="#161616" stroke-width="2.0" stroke-linecap="round" stroke-linejoin="round"/><path d="M12.1 7.2 H9.8 Q7.4 7.2 7.4 9.6 V12" fill="none" stroke="#161616" stroke-width="1.6" stroke-linecap="round" stroke-linejoin="round"/><path d="M4.6 4.8 H8.6" fill="none" stroke="#161616" stroke-width="1.5" stroke-linecap="round" stroke-linejoin="round"/></svg>
<div class="a" style="left:369.8px;top:546.8px;width:90.6px;height:50.2px;border-radius:5.5px;background:#fff;border:2.2px solid #161616;box-sizing:border-box"></div>
<div class="a" style="left:373.6px;top:550px;width:83.6px;height:43.8px;border-radius:2.5px;overflow:hidden;background:#105eb6"><svg width="83.6" height="47" viewBox="0 0 584 328" preserveAspectRatio="none" style="margin-top:-1.6px"><defs>
<linearGradient id="t1p2" x1="0" y1="0" x2="1" y2="0"><stop offset="0" stop-color="#1460bc"/><stop offset=".45" stop-color="#196dc9"/><stop offset=".8" stop-color="#3a92dc"/><stop offset="1" stop-color="#5cb2ea"/></linearGradient>
<linearGradient id="t1p1" x1="0" y1="0" x2="1" y2="0"><stop offset="0" stop-color="#c4e2f6"/><stop offset=".45" stop-color="#eaf3fb"/><stop offset="1" stop-color="#f4f8fc"/></linearGradient>
<linearGradient id="t1d1" x1="0" y1="0" x2="0" y2="1"><stop offset="0" stop-color="#3f8fd6"/><stop offset=".5" stop-color="#74b3e2"/><stop offset="1" stop-color="#4b96d4"/></linearGradient>
<linearGradient id="t1t1" x1="0" y1="0" x2="0" y2="1"><stop offset="0" stop-color="#6fb4e4"/><stop offset="1" stop-color="#3c8cd4"/></linearGradient>
<linearGradient id="t1p3" x1="0" y1="1" x2="1" y2="0"><stop offset="0" stop-color="#86bee6"/><stop offset="1" stop-color="#a9d5f1"/></linearGradient>
<linearGradient id="t1r1" x1="0" y1="0" x2="1" y2="1"><stop offset="0" stop-color="#bfe2f7"/><stop offset=".6" stop-color="#a3d3f2"/><stop offset="1" stop-color="#8cc6ee"/></linearGradient>
<linearGradient id="t1r2" x1="0" y1="0" x2="1" y2="0"><stop offset="0" stop-color="#86c4ee"/><stop offset="1" stop-color="#5ea9e0"/></linearGradient>
<linearGradient id="t1w1" x1="0" y1="0" x2="0" y2="1"><stop offset="0" stop-color="#e6f0f9"/><stop offset="1" stop-color="#f3f6fa"/></linearGradient>
<pattern id="t1tx" width="3" height="3" patternUnits="userSpaceOnUse"><rect width="3" height="3" fill="#0f6dd0"/><circle cx="1.5" cy="1.5" r=".7" fill="#0b60bf"/></pattern>
<clipPath id="t1cq"><path d="M535 245 L584 245 L584 328 L491 328Z"/></clipPath>
</defs><path d="M387 0 L505 0 L552 82 L342.5 82Z" fill="#8fc8ec"/><path d="M387 0 L470 0 L424 81Z" fill="#a7daf6"/><path d="M387 0 L342.5 82 L424 81Z" fill="#8ac3e8"/><path d="M505 0 L584 0 L584 82 L552 82Z" fill="#0e6acc"/><path d="M343 82 L299 163 L390 163Z" fill="url(#t1t1)"/><path d="M343 82 L424 82 L390 163Z" fill="#88c7ee"/><path d="M518 82 L584 82 L584 245 L535 245 L514 241 L474 163Z" fill="url(#t1r1)"/><path d="M518 82 L564 162 L584 131 L584 82Z" fill="#a9d8f4"/><path d="M518 82 L538 117 L550 82Z" fill="#8fc9ee"/><path d="M584 134 L566 164 L575 168 L535 245 L584 245Z" fill="url(#t1r2)"/><path d="M424 82 L518 82 L474 163.5 L390 163Z" fill="url(#t1p1)"/><path d="M298 164 L345 241 L347.6 251 L308.5 321 L258 239Z" fill="url(#t1d1)"/><path d="M300 164 L474 164 L514 241.5 L346 241.5Z" fill="url(#t1p2)"/><path d="M258 239 L208 328 L311 328Z" fill="#1666be"/><path d="M346 242 L436 242 L383 328 L311 328 L308.5 321 L347.6 251Z" fill="url(#t1p3)"/><path d="M438 243 L536 243 L491.5 328Z" fill="#9dd0f2"/><path d="M433 243 L441 243 L492.5 328 L381 328Z" fill="url(#t1w1)"/><path d="M535 245 L584 245 L584 328 L491 328Z" fill="#0e6acc"/><circle cx="580" cy="354" r="86" fill="#0d4b96" clip-path="url(#t1cq)"/><path d="M298.5 164 L208 328" stroke="#e4f1fc" stroke-width="1.35" fill="none" stroke-linecap="round" opacity=".8"/><path d="M298.5 164 L345.5 241.5 M258 238.6 L311.5 327" stroke="#e4f1fc" stroke-width="1.35" fill="none" stroke-linecap="round"/><path d="M298.5 164 L474 164 L514 241.5" stroke="#e4f1fc" stroke-width="1.35" fill="none" stroke-linecap="round"/><path d="M345.5 242 L535 244" stroke="#e4f1fc" stroke-width="1.35" fill="none" stroke-linecap="round"/><path d="M575 168 L491 328" stroke="#e4f1fc" stroke-width="1.35" fill="none" stroke-linecap="round"/><rect x="38" y="33" width="60" height="32" fill="none" stroke="#fff" stroke-width="3" opacity=".6"/><rect x="36" y="108" width="250" height="9" fill="#fff" opacity=".55"/><rect x="36" y="142" width="208" height="9" fill="#fff" opacity=".55"/><rect x="38" y="254" width="110" height="6" fill="#fff" opacity=".5"/></svg><div class="a" style="left:0;top:0;width:100%;height:100%;background:rgba(0,4,20,.43)"></div></div>
<div class="a" style="left:433.5px;top:552.5px;width:20px;height:20px;border-radius:50%;background:#fff"></div>
<svg class="ic" style="left:437px;top:560.3px" width="13" height="4.4" viewBox="0 0 13 4.4"><circle cx="2.2" cy="2.2" r="1.5" fill="#1a1a1a"/><circle cx="6.5" cy="2.2" r="1.5" fill="#1a1a1a"/><circle cx="10.8" cy="2.2" r="1.5" fill="#1a1a1a"/></svg>
<div class="a" style="left:376.6px;top:579.4px;width:11px;height:11.4px;border-radius:2.5px;background:#8d8d8d"></div>
<span class="lt" style="left:378.93px;top:580.25px;font-size:11.4px;font-weight:bold;color:#1c1c1c;">1</span>
<div class="a" style="left:471.5px;top:548.2px;width:87.7px;height:47.8px;border-radius:4px;overflow:hidden;background:#1767c4"><svg width="87.7" height="47.8" viewBox="0 0 87.7 47.8"><path d="M0 0 H16 L6 20 L0 20Z" fill="#0f58b0"/><path d="M1 1 L13 1 L7 12Z" fill="#5fa9e6"/><path d="M3 0 L10 14 L12 12 L6 0Z" fill="#d8ecfa"/><path d="M0 14 L5 22 L0 30Z" fill="#4c9be0"/><path d="M87.7 0 V47.8 H56 L62 36 L70 20 L79 4 L81 0Z" fill="#0f58b0"/><path d="M79 5 L87.7 22 V30 L70 30 Z" fill="#8cc4ee"/><path d="M79 5 L84 15 L74 15Z" fill="#dceefb"/><path d="M70 30 L62 46 H78 L87.7 30Z" fill="#4c9be0"/><path d="M62 47.8 L66 38 L72 47.8Z" fill="#e4f1fb"/><path d="M16.5 22.7 h2 v2.6 h-2Z M20.0 22.7 h9 v2.6 h-9Z M18 27.7 h2 v2.6 h-2Z M21.5 27.7 h13 v2.6 h-13Z M16.5 32.4 h2 v2.6 h-2Z M20.0 32.4 h29 v2.6 h-29Z M16.5 36.8 h2 v2.6 h-2Z M20.0 36.8 h14 v2.6 h-14Z M18 41.2 h2 v2.6 h-2Z M21.5 41.2 h28 v2.6 h-28Z" fill="#fff" opacity=".92"/></svg></div>
<span class="lt" style="left:511.80px;top:553.81px;font-size:6.6px;font-weight:bold;color:#fff;transform:scaleX(0.8870);transform-origin:0 0;">CONTENTS</span>
<div class="a" style="left:474.9px;top:580.2px;width:12.4px;height:12.5px;border-radius:2.5px;background:#fff"></div>
<span class="lt" style="left:478.03px;top:580.95px;font-size:11.4px;font-weight:bold;color:#1c1c1c;">2</span>
<div class="a" style="left:543.5px;top:580px;width:13px;height:13px;border-radius:50%;background:#fff"></div>
<svg class="ic" style="left:546px;top:583.2px" width="8" height="6.4" viewBox="0 0 8 6.4"><defs><linearGradient id="cg0" x1="0" y1="0" x2="1" y2="1"><stop offset="0" stop-color="#e0409a"/><stop offset="1" stop-color="#7040d0"/></linearGradient></defs><path d="M0.48 1.152 L2.16 2.688 L4.0 0.128 L5.84 2.688 L7.52 1.152 L6.88 5.5040000000000004 Q6.8 6.272 5.92 6.272 L2.08 6.272 Q1.2 6.272 1.12 5.5040000000000004Z" fill="url(#cg0)"/></svg>
<div class="a" style="left:984px;top:547.4px;width:50px;height:50px;background:#e6e6e6;border-radius:6px;"></div>
<svg class="ic" style="left:1004.5px;top:557.2px" width="9" height="9" viewBox="0 0 9 9" ><path d="M4.5 .5 V8.5 M.5 4.5 H8.5" fill="none" stroke="#222" stroke-width="1.5" stroke-linecap="round" stroke-linejoin="round"/></svg>
<span class="tl" style="left:993.7px;top:573.8px;font-size:10.6px;width:30.6px;color:#222">ページ</span>
</main>
</div>
</body>
</html>
